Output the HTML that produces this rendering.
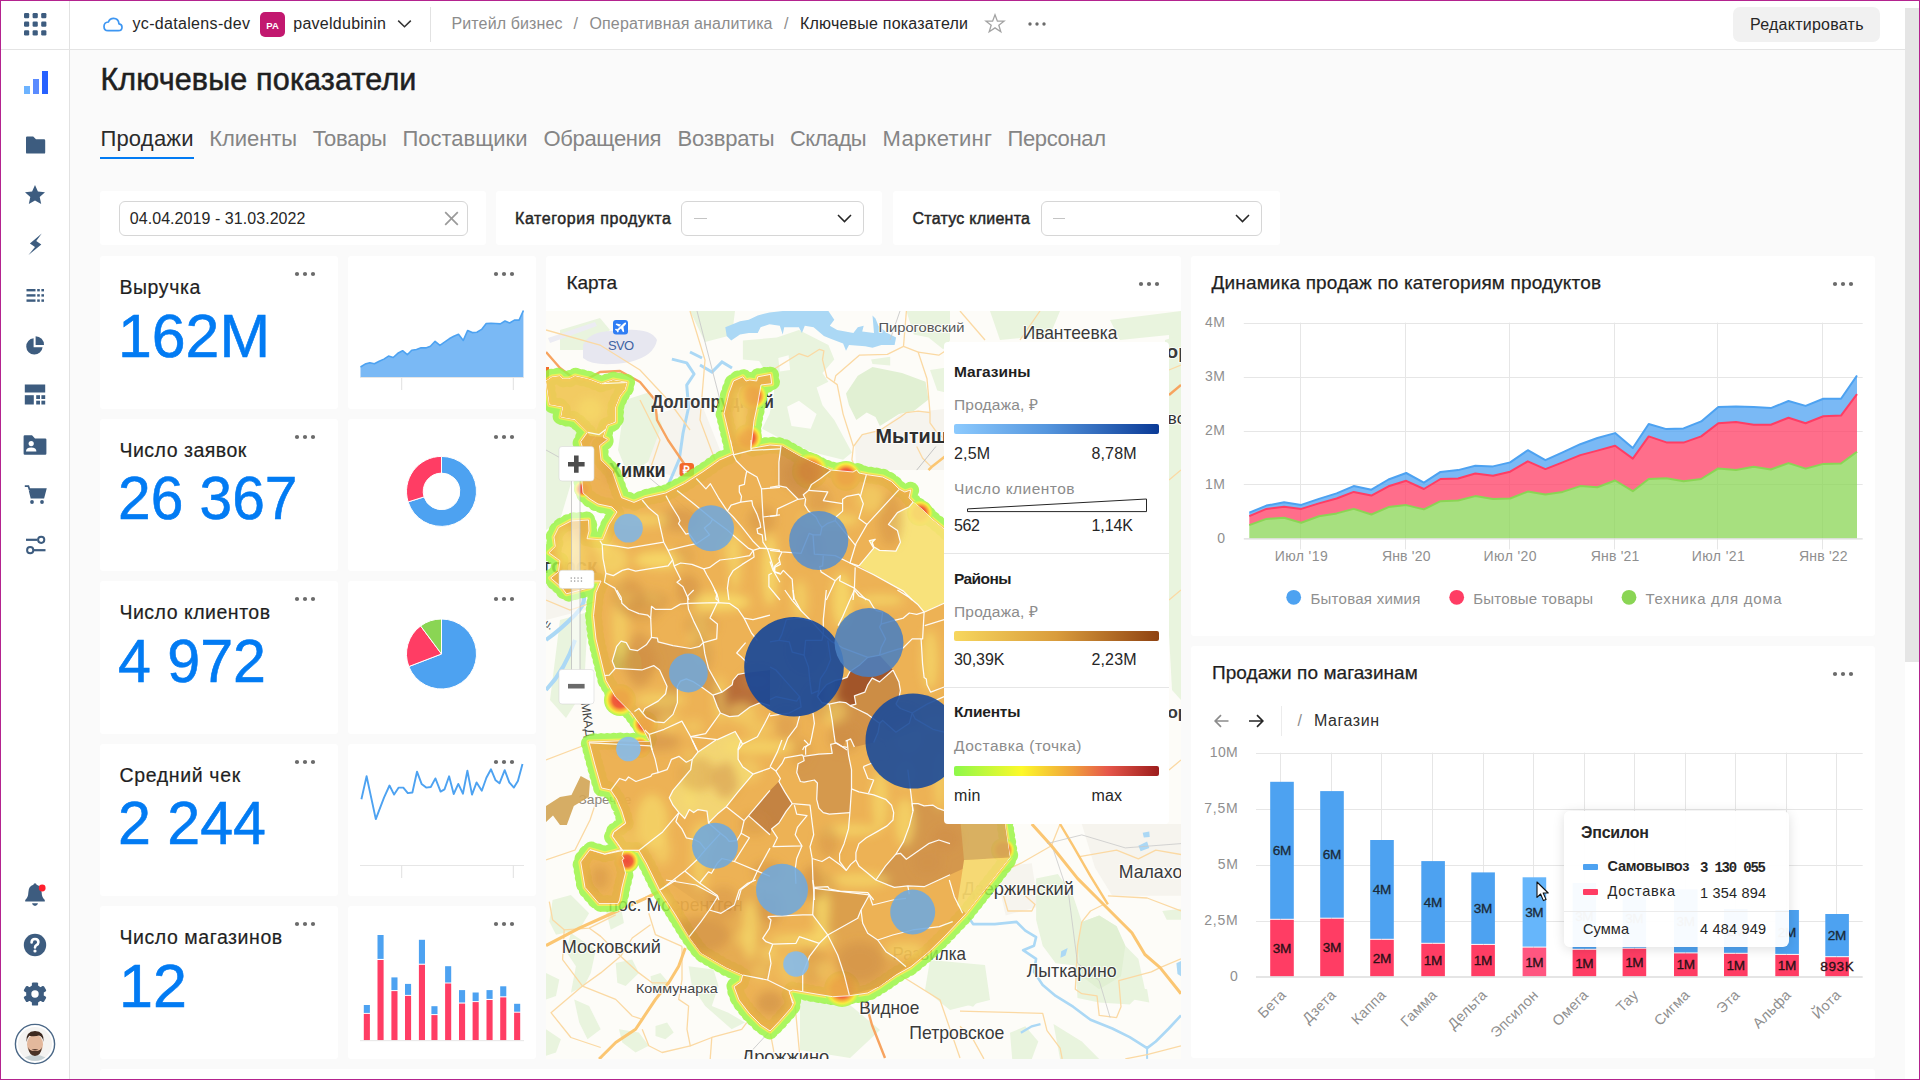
<!DOCTYPE html>
<html lang="ru"><head><meta charset="utf-8"><title>Ключевые показатели</title><style>html,body{margin:0;padding:0;}body{width:1920px;height:1080px;overflow:hidden;background:#fafafa;position:relative;font-family:"Liberation Sans",sans-serif;}.b{position:absolute;display:block;}.t{position:absolute;white-space:nowrap;line-height:1;}</style></head><body>
<div class="b" style="left:1px;top:1px;width:68px;height:1078px;background:#fff;"></div>
<div class="b" style="left:69px;top:1px;width:1px;height:1078px;background:#e2e2e2;"></div>
<svg class="b" style="left:23.8px;top:12.6px" width="23" height="23"><rect x="0.0" y="0.0" width="5.2" height="5.2" rx="1.2" fill="#3d5c7f"/><rect x="8.6" y="0.0" width="5.2" height="5.2" rx="1.2" fill="#3d5c7f"/><rect x="17.2" y="0.0" width="5.2" height="5.2" rx="1.2" fill="#3d5c7f"/><rect x="0.0" y="8.6" width="5.2" height="5.2" rx="1.2" fill="#3d5c7f"/><rect x="8.6" y="8.6" width="5.2" height="5.2" rx="1.2" fill="#3d5c7f"/><rect x="17.2" y="8.6" width="5.2" height="5.2" rx="1.2" fill="#3d5c7f"/><rect x="0.0" y="17.2" width="5.2" height="5.2" rx="1.2" fill="#3d5c7f"/><rect x="8.6" y="17.2" width="5.2" height="5.2" rx="1.2" fill="#3d5c7f"/><rect x="17.2" y="17.2" width="5.2" height="5.2" rx="1.2" fill="#3d5c7f"/></svg>
<svg class="b" style="left:23px;top:70px" width="26" height="25"><rect x="1" y="16" width="6" height="8" fill="#6db3ff"/><rect x="10" y="9" width="6" height="15" fill="#5a8bff"/><rect x="19" y="1" width="6" height="23" fill="#2761ff"/></svg>
<svg class="b" style="left:25px;top:135px" width="22" height="20" viewBox="0 0 22 20"><path d="M1 2.6Q1 1.5 2.1 1.5H8.2L11 4.3H19Q20.2 4.3 20.2 5.5V17.4Q20.2 18.6 19 18.6H2.2Q1 18.6 1 17.4Z" fill="#3d5c7f"/></svg>
<svg class="b" style="left:24px;top:184px" width="22" height="21" viewBox="0 0 22 21"><path d="M11 1L13.9 7.6L21 8.3L15.7 13.1L17.2 20.1L11 16.5L4.8 20.1L6.3 13.1L1 8.3L8.1 7.6Z" fill="#3d5c7f"/></svg>
<svg class="b" style="left:27px;top:232px" width="16" height="24" viewBox="0 0 16 24"><path d="M14.75 1.6L2.9 11.4L8 14.9L1.5 23L14.3 12.4L9.25 9Z" fill="#3d5c7f"/></svg>
<svg class="b" style="left:25.6px;top:287.6px" width="19" height="15"><rect x="0.5" y="1.0" width="9" height="2.4" fill="#3d5c7f"/><rect x="11.2" y="1.0" width="2.6" height="2.4" fill="#3d5c7f"/><rect x="15.4" y="1.0" width="2.6" height="2.4" fill="#3d5c7f"/><rect x="0.5" y="6.2" width="9" height="2.4" fill="#3d5c7f"/><rect x="11.2" y="6.2" width="2.6" height="2.4" fill="#3d5c7f"/><rect x="15.4" y="6.2" width="2.6" height="2.4" fill="#3d5c7f"/><rect x="0.5" y="11.4" width="9" height="2.4" fill="#3d5c7f"/><rect x="11.2" y="11.4" width="2.6" height="2.4" fill="#3d5c7f"/><rect x="15.4" y="11.4" width="2.6" height="2.4" fill="#3d5c7f"/></svg>
<svg class="b" style="left:25px;top:335px" width="20" height="20" viewBox="0 0 20 20"><path d="M8.6 3.2A8.2 8.2 0 1 0 17.6 12.2H8.6Z" fill="#3d5c7f"/><path d="M10.6 1.2A8.6 8.6 0 0 1 19 10H10.6Z" fill="#3d5c7f"/></svg>
<svg class="b" style="left:24px;top:384px" width="22" height="22" viewBox="0 0 22 22"><rect x="0.8" y="0.5" width="20.4" height="8" fill="#3d5c7f"/><rect x="0.8" y="11.2" width="9" height="9.3" fill="#3d5c7f"/><rect x="12.2" y="11.2" width="3.8" height="3.8" fill="#3d5c7f"/><rect x="17.4" y="11.2" width="3.8" height="3.8" fill="#3d5c7f"/><rect x="12.2" y="16.7" width="3.8" height="3.8" fill="#3d5c7f"/><rect x="17.4" y="16.7" width="3.8" height="3.8" fill="#3d5c7f"/></svg>
<svg class="b" style="left:23px;top:434px" width="24" height="22" viewBox="0 0 24 22"><path d="M0.6 2.4Q0.6 1.2 1.8 1.2H9L12 4.4H22.2Q23.4 4.4 23.4 5.6V19.6Q23.4 20.8 22.2 20.8H1.8Q0.6 20.8 0.6 19.6Z" fill="#3d5c7f"/><circle cx="8.2" cy="9.6" r="2.6" fill="#fff"/><path d="M3 17.6Q3 13.4 8.2 13.4Q13.4 13.4 13.4 17.6Z" fill="#fff"/></svg>
<svg class="b" style="left:24px;top:485px" width="23" height="20" viewBox="0 0 23 20"><path d="M0.8 1.2H4.4L5.4 4.2H21.6L19.4 12.6H7.4L5.6 5.2" fill="none" stroke="#3d5c7f" stroke-width="1.8"/><path d="M5.6 4.2H21.4L19.3 12.2H7.6Z" fill="#3d5c7f"/><circle cx="8" cy="17" r="1.9" fill="#3d5c7f"/><circle cx="18" cy="17" r="1.9" fill="#3d5c7f"/></svg>
<svg class="b" style="left:25px;top:534px" width="22" height="22" viewBox="0 0 22 22"><path d="M1 5.8H12.5" stroke="#3d5c7f" stroke-width="2.2"/><circle cx="16.2" cy="5.8" r="3.1" fill="#fff" stroke="#3d5c7f" stroke-width="2"/><path d="M9 16.2H20.5" stroke="#3d5c7f" stroke-width="2.2"/><circle cx="5.2" cy="16.2" r="3.1" fill="#fff" stroke="#3d5c7f" stroke-width="2"/></svg>
<svg class="b" style="left:23px;top:881px" width="26" height="27" viewBox="0 0 26 27"><path d="M12 2.2Q13.4 2.2 13.6 3.8Q18.4 5 18.6 11Q18.8 16.6 21.8 19V20.6H2.2V19Q5.2 16.6 5.4 11Q5.6 5 10.4 3.8Q10.6 2.2 12 2.2Z" fill="#3d5c7f"/><path d="M9 22.2H15Q14.4 25 12 25Q9.6 25 9 22.2Z" fill="#3d5c7f"/><circle cx="19.2" cy="7" r="3.4" fill="#ff1f2d"/></svg>
<svg class="b" style="left:23px;top:932.5px" width="24" height="24" viewBox="0 0 24 24"><circle cx="12" cy="12" r="11.2" fill="#3d5c7f"/><path d="M8.6 9.4Q8.6 6 12 6Q15.4 6 15.4 9.2Q15.4 11 13.4 12.2Q12 13 12 14.4" fill="none" stroke="#fff" stroke-width="2.6" stroke-linecap="round"/><circle cx="12" cy="18" r="1.6" fill="#fff"/></svg>
<svg class="b" style="left:23px;top:982.4px" width="24" height="24" viewBox="0 0 24 24"><rect x="8.9" y="0.4" width="6.2" height="6" rx="1.2" fill="#3d5c7f" transform="rotate(0 12 12)"/><rect x="8.9" y="0.4" width="6.2" height="6" rx="1.2" fill="#3d5c7f" transform="rotate(60 12 12)"/><rect x="8.9" y="0.4" width="6.2" height="6" rx="1.2" fill="#3d5c7f" transform="rotate(120 12 12)"/><rect x="8.9" y="0.4" width="6.2" height="6" rx="1.2" fill="#3d5c7f" transform="rotate(180 12 12)"/><rect x="8.9" y="0.4" width="6.2" height="6" rx="1.2" fill="#3d5c7f" transform="rotate(240 12 12)"/><rect x="8.9" y="0.4" width="6.2" height="6" rx="1.2" fill="#3d5c7f" transform="rotate(300 12 12)"/><circle cx="12" cy="12" r="8.9" fill="#3d5c7f"/><circle cx="12" cy="12" r="3.7" fill="#fff"/></svg>
<svg class="b" style="left:14px;top:1023.3px" width="42" height="42" viewBox="0 0 42 42"><defs><clipPath id="avc"><circle cx="21" cy="21" r="17"/></clipPath></defs><circle cx="21" cy="21" r="19.6" fill="#fff" stroke="#4a6786" stroke-width="1.4"/><g clip-path="url(#avc)"><rect x="0" y="0" width="42" height="42" fill="#f4f3f1"/><ellipse cx="21" cy="40" rx="14" ry="8" fill="#c9d3d6"/><ellipse cx="21" cy="21.5" rx="8" ry="10.2" fill="#e3b89c"/><path d="M12.4 19Q11.4 8.4 21 8Q30.6 8.4 29.6 19Q28.6 13.6 25 12.6Q20 14 15.4 12.8Q13.2 14.4 12.4 19Z" fill="#3d2a20"/><path d="M14 24Q15 32.6 21 33Q27 32.6 28 24Q26.6 28.4 21 28Q15.4 28.4 14 24Z" fill="#4a3327"/><path d="M17.6 26.6Q21 25.4 24.4 26.6Q21 28.4 17.6 26.6Z" fill="#5a3d30"/></g></svg>
<div class="b" style="left:70px;top:1px;width:1835px;height:48px;background:#fff;"></div>
<div class="b" style="left:1px;top:49px;width:1904px;height:1px;background:#e4e4e4;"></div>
<svg class="b" style="left:102px;top:15px" width="22" height="18" viewBox="0 0 22 18"><path d="M6 15.6H16.4Q20 15.6 20 12.2Q20 9.2 17 8.8Q16.4 3.4 11.6 3.4Q7.8 3.4 6.4 7Q2 7.4 2 11.4Q2 15.6 6 15.6Z" fill="none" stroke="#3d96f2" stroke-width="1.7" stroke-linejoin="round"/></svg>
<span id="t1" class="t" style="left:132.5px;top:15.5px;font-size:16px;color:#262626;letter-spacing:0.325px;">yc-datalens-dev</span>
<div class="b" style="left:260px;top:12px;width:25px;height:25px;background:#c2186f;border-radius:5px;"></div>
<span id="t2" class="t" style="left:272.5px;top:20.6px;font-size:9.5px;color:#fff;font-weight:700;transform:translateX(-50%);">PA</span>
<span id="t3" class="t" style="left:293.3px;top:15.5px;font-size:16px;color:#262626;letter-spacing:0.258px;">paveldubinin</span>
<svg class="b" style="left:397px;top:19px" width="15" height="10" viewBox="0 0 15 10"><path d="M1.2 1.6L7.5 7.8L13.8 1.6" fill="none" stroke="#333" stroke-width="1.5"/></svg>
<div class="b" style="left:430px;top:7px;width:1px;height:35px;background:#e2e2e2;"></div>
<span id="t4" class="t" style="left:451.5px;top:15.5px;font-size:16px;color:#8c8c8c;letter-spacing:0.121px;">Ритейл бизнес</span>
<span id="t5" class="t" style="left:573.5px;top:15.5px;font-size:16px;color:#8c8c8c;">/</span>
<span id="t6" class="t" style="left:589.5px;top:15.5px;font-size:16px;color:#8c8c8c;letter-spacing:0.126px;">Оперативная аналитика</span>
<span id="t7" class="t" style="left:784.0px;top:15.5px;font-size:16px;color:#8c8c8c;">/</span>
<span id="t8" class="t" style="left:800.0px;top:15.5px;font-size:16px;color:#262626;letter-spacing:0.212px;">Ключевые показатели</span>
<svg class="b" style="left:984px;top:13px" width="22" height="21" viewBox="0 0 22 21"><path d="M11 1.8L13.4 8.2H20L14.8 12.2L16.8 18.8L11 14.9L5.2 18.8L7.2 12.2L2 8.2H8.6Z" fill="none" stroke="#a3a3a3" stroke-width="1.3" stroke-linejoin="miter"/></svg>
<svg class="b" style="left:1025.5px;top:20.5px" width="22" height="6" viewBox="0 0 22 6"><circle cx="4" cy="3" r="1.7" fill="#6b6b6b"/><circle cx="11" cy="3" r="1.7" fill="#6b6b6b"/><circle cx="18" cy="3" r="1.7" fill="#6b6b6b"/></svg>
<div class="b" style="left:1733px;top:7px;width:147px;height:35px;background:#f1f1f1;border-radius:7px;"></div>
<span id="t9" class="t" style="left:1750.0px;top:16.5px;font-size:16px;color:#262626;letter-spacing:0.247px;">Редактировать</span>
<div class="b" style="left:1905px;top:1px;width:14px;height:1078px;background:#fff;"></div>
<div class="b" style="left:1905px;top:8px;width:14px;height:654px;background:#e5e5e5;"></div>
<span id="t10" class="t" style="left:100.4px;top:63.8px;font-size:30.5px;color:#1f1f1f;-webkit-text-stroke:0.55px #1f1f1f;letter-spacing:0.168px;">Ключевые показатели</span>
<span id="t11" class="t" style="left:100.4px;top:127.8px;font-size:22px;color:#2b2b2b;letter-spacing:0.218px;">Продажи</span>
<span id="t12" class="t" style="left:209.3px;top:127.8px;font-size:22px;color:#858585;letter-spacing:-0.086px;">Клиенты</span>
<span id="t13" class="t" style="left:312.7px;top:127.8px;font-size:22px;color:#858585;letter-spacing:-0.298px;">Товары</span>
<span id="t14" class="t" style="left:402.5px;top:127.8px;font-size:22px;color:#858585;letter-spacing:-0.012px;">Поставщики</span>
<span id="t15" class="t" style="left:543.5px;top:127.8px;font-size:22px;color:#858585;letter-spacing:-0.328px;">Обращения</span>
<span id="t16" class="t" style="left:677.5px;top:127.8px;font-size:22px;color:#858585;letter-spacing:-0.188px;">Возвраты</span>
<span id="t17" class="t" style="left:790.0px;top:127.8px;font-size:22px;color:#858585;letter-spacing:-0.597px;">Склады</span>
<span id="t18" class="t" style="left:882.5px;top:127.8px;font-size:22px;color:#858585;letter-spacing:0.316px;">Маркетинг</span>
<span id="t19" class="t" style="left:1007.5px;top:127.8px;font-size:22px;color:#858585;letter-spacing:-0.357px;">Персонал</span>
<div class="b" style="left:100px;top:157px;width:94px;height:2px;background:#027bf3;"></div>
<div class="b" style="left:100px;top:191.4px;width:386px;height:54px;background:#fff;border-radius:3px;"></div>
<div class="b" style="left:496px;top:191.4px;width:386px;height:54px;background:#fff;border-radius:3px;"></div>
<div class="b" style="left:893px;top:191.4px;width:387px;height:54px;background:#fff;border-radius:3px;"></div>
<div class="b" style="left:119px;top:201px;width:349px;height:34.5px;background:#fff;border-radius:6px;border:1px solid #d6d6d6;box-sizing:border-box;"></div>
<span id="t20" class="t" style="left:129.8px;top:210.5px;font-size:16px;color:#262626;letter-spacing:0.056px;">04.04.2019 - 31.03.2022</span>
<svg class="b" style="left:443px;top:210px" width="17" height="17" viewBox="0 0 17 17"><path d="M2.2 2.2L14.8 14.8M14.8 2.2L2.2 14.8" stroke="#9a9a9a" stroke-width="1.7"/></svg>
<span id="t21" class="t" style="left:515.0px;top:210.5px;font-size:16px;color:#262626;-webkit-text-stroke:0.45px #262626;letter-spacing:0.593px;">Категория продукта</span>
<div class="b" style="left:681px;top:201px;width:183px;height:34.5px;background:#fff;border-radius:6px;border:1px solid #d6d6d6;box-sizing:border-box;"></div>
<div class="b" style="left:694px;top:218px;width:12.5px;height:1px;background:#c4c4c4;"></div>
<svg class="b" style="left:836px;top:213px" width="17" height="11" viewBox="0 0 17 11"><path d="M2 2L8.5 8.6L15 2" fill="none" stroke="#262626" stroke-width="1.5"/></svg>
<span id="t22" class="t" style="left:912.5px;top:210.5px;font-size:16px;color:#262626;-webkit-text-stroke:0.45px #262626;letter-spacing:0.249px;">Статус клиента</span>
<div class="b" style="left:1041px;top:201px;width:221px;height:34.5px;background:#fff;border-radius:6px;border:1px solid #d6d6d6;box-sizing:border-box;"></div>
<div class="b" style="left:1052.5px;top:218px;width:12.5px;height:1px;background:#c4c4c4;"></div>
<svg class="b" style="left:1233.5px;top:213px" width="17" height="11" viewBox="0 0 17 11"><path d="M2 2L8.5 8.6L15 2" fill="none" stroke="#262626" stroke-width="1.5"/></svg>
<div class="b" style="left:100px;top:256.25px;width:237.5px;height:152.5px;background:#fff;border-radius:3px;"></div>
<div class="b" style="left:347.5px;top:256.25px;width:188.5px;height:152.5px;background:#fff;border-radius:3px;"></div>
<span id="t23" class="t" style="left:119.4px;top:278.0px;font-size:19.5px;color:#1f1f1f;-webkit-text-stroke:0.2px #1f1f1f;letter-spacing:0.604px;">Выручка</span>
<span id="t24" class="t" style="left:118.0px;top:304.5px;font-size:61.5px;color:#027bf3;-webkit-text-stroke:0.6px #027bf3;transform-origin:0 0;transform:scaleX(0.9880);white-space:pre;">162M</span>
<svg class="b" style="left:294.3px;top:271.05px" width="22" height="6" viewBox="0 0 22 6"><circle cx="3" cy="3" r="2.1" fill="#6b6b6b"/><circle cx="11" cy="3" r="2.1" fill="#6b6b6b"/><circle cx="19" cy="3" r="2.1" fill="#6b6b6b"/></svg>
<svg class="b" style="left:493px;top:271.05px" width="22" height="6" viewBox="0 0 22 6"><circle cx="3" cy="3" r="2.1" fill="#6b6b6b"/><circle cx="11" cy="3" r="2.1" fill="#6b6b6b"/><circle cx="19" cy="3" r="2.1" fill="#6b6b6b"/></svg>
<div class="b" style="left:100px;top:418.75px;width:237.5px;height:152.5px;background:#fff;border-radius:3px;"></div>
<div class="b" style="left:347.5px;top:418.75px;width:188.5px;height:152.5px;background:#fff;border-radius:3px;"></div>
<span id="t25" class="t" style="left:119.4px;top:440.5px;font-size:19.5px;color:#1f1f1f;-webkit-text-stroke:0.2px #1f1f1f;letter-spacing:0.511px;">Число заявок</span>
<span id="t26" class="t" style="left:118.0px;top:467.0px;font-size:61.5px;color:#027bf3;-webkit-text-stroke:0.6px #027bf3;transform-origin:0 0;transform:scaleX(0.9542);white-space:pre;">26 367</span>
<svg class="b" style="left:294.3px;top:433.55px" width="22" height="6" viewBox="0 0 22 6"><circle cx="3" cy="3" r="2.1" fill="#6b6b6b"/><circle cx="11" cy="3" r="2.1" fill="#6b6b6b"/><circle cx="19" cy="3" r="2.1" fill="#6b6b6b"/></svg>
<svg class="b" style="left:493px;top:433.55px" width="22" height="6" viewBox="0 0 22 6"><circle cx="3" cy="3" r="2.1" fill="#6b6b6b"/><circle cx="11" cy="3" r="2.1" fill="#6b6b6b"/><circle cx="19" cy="3" r="2.1" fill="#6b6b6b"/></svg>
<div class="b" style="left:100px;top:581.25px;width:237.5px;height:152.5px;background:#fff;border-radius:3px;"></div>
<div class="b" style="left:347.5px;top:581.25px;width:188.5px;height:152.5px;background:#fff;border-radius:3px;"></div>
<span id="t27" class="t" style="left:119.4px;top:603.0px;font-size:19.5px;color:#1f1f1f;-webkit-text-stroke:0.2px #1f1f1f;letter-spacing:0.511px;">Число клиентов</span>
<span id="t28" class="t" style="left:118.0px;top:629.5px;font-size:61.5px;color:#027bf3;-webkit-text-stroke:0.6px #027bf3;transform-origin:0 0;transform:scaleX(0.9616);white-space:pre;">4 972</span>
<svg class="b" style="left:294.3px;top:596.05px" width="22" height="6" viewBox="0 0 22 6"><circle cx="3" cy="3" r="2.1" fill="#6b6b6b"/><circle cx="11" cy="3" r="2.1" fill="#6b6b6b"/><circle cx="19" cy="3" r="2.1" fill="#6b6b6b"/></svg>
<svg class="b" style="left:493px;top:596.05px" width="22" height="6" viewBox="0 0 22 6"><circle cx="3" cy="3" r="2.1" fill="#6b6b6b"/><circle cx="11" cy="3" r="2.1" fill="#6b6b6b"/><circle cx="19" cy="3" r="2.1" fill="#6b6b6b"/></svg>
<div class="b" style="left:100px;top:743.75px;width:237.5px;height:152.5px;background:#fff;border-radius:3px;"></div>
<div class="b" style="left:347.5px;top:743.75px;width:188.5px;height:152.5px;background:#fff;border-radius:3px;"></div>
<span id="t29" class="t" style="left:119.4px;top:765.5px;font-size:19.5px;color:#1f1f1f;-webkit-text-stroke:0.2px #1f1f1f;letter-spacing:0.657px;">Средний чек</span>
<span id="t30" class="t" style="left:118.0px;top:792.0px;font-size:61.5px;color:#027bf3;-webkit-text-stroke:0.6px #027bf3;transform-origin:0 0;transform:scaleX(0.9616);white-space:pre;">2 244</span>
<svg class="b" style="left:294.3px;top:758.55px" width="22" height="6" viewBox="0 0 22 6"><circle cx="3" cy="3" r="2.1" fill="#6b6b6b"/><circle cx="11" cy="3" r="2.1" fill="#6b6b6b"/><circle cx="19" cy="3" r="2.1" fill="#6b6b6b"/></svg>
<svg class="b" style="left:493px;top:758.55px" width="22" height="6" viewBox="0 0 22 6"><circle cx="3" cy="3" r="2.1" fill="#6b6b6b"/><circle cx="11" cy="3" r="2.1" fill="#6b6b6b"/><circle cx="19" cy="3" r="2.1" fill="#6b6b6b"/></svg>
<div class="b" style="left:100px;top:906.25px;width:237.5px;height:152.5px;background:#fff;border-radius:3px;"></div>
<div class="b" style="left:347.5px;top:906.25px;width:188.5px;height:152.5px;background:#fff;border-radius:3px;"></div>
<span id="t31" class="t" style="left:119.4px;top:928.0px;font-size:19.5px;color:#1f1f1f;-webkit-text-stroke:0.2px #1f1f1f;letter-spacing:0.566px;">Число магазинов</span>
<span id="t32" class="t" style="left:119.0px;top:954.5px;font-size:61.5px;color:#027bf3;-webkit-text-stroke:0.6px #027bf3;transform-origin:0 0;transform:scaleX(0.9924);white-space:pre;">12</span>
<svg class="b" style="left:294.3px;top:921.05px" width="22" height="6" viewBox="0 0 22 6"><circle cx="3" cy="3" r="2.1" fill="#6b6b6b"/><circle cx="11" cy="3" r="2.1" fill="#6b6b6b"/><circle cx="19" cy="3" r="2.1" fill="#6b6b6b"/></svg>
<svg class="b" style="left:493px;top:921.05px" width="22" height="6" viewBox="0 0 22 6"><circle cx="3" cy="3" r="2.1" fill="#6b6b6b"/><circle cx="11" cy="3" r="2.1" fill="#6b6b6b"/><circle cx="19" cy="3" r="2.1" fill="#6b6b6b"/></svg>
<svg class="b" style="left:0;top:0" width="1920" height="1080" viewBox="0 0 1920 1080"><polygon points="360.5,377.6 360.5,367.0 365.1,364.1 369.8,362.7 374.4,363.8 379.2,361.3 383.9,359.1 388.5,356.1 393.2,357.5 397.8,353.3 402.6,350.7 407.3,354.7 411.7,350.2 416.5,349.5 421.1,347.7 425.8,347.9 430.4,346.3 435.1,341.3 439.9,345.4 444.5,342.2 449.2,338.8 453.8,336.3 458.5,334.3 463.3,340.4 467.6,330.5 472.3,332.6 476.9,332.3 481.6,329.4 486.2,323.5 491.0,323.3 495.7,323.5 500.3,323.9 505.0,321.0 509.6,323.0 514.4,320.1 519.1,320.1 523.4,310.5 523.4,377.6" fill="#4da2f1" fill-opacity="0.75"/><polyline points="360.5,367.0 365.1,364.1 369.8,362.7 374.4,363.8 379.2,361.3 383.9,359.1 388.5,356.1 393.2,357.5 397.8,353.3 402.6,350.7 407.3,354.7 411.7,350.2 416.5,349.5 421.1,347.7 425.8,347.9 430.4,346.3 435.1,341.3 439.9,345.4 444.5,342.2 449.2,338.8 453.8,336.3 458.5,334.3 463.3,340.4 467.6,330.5 472.3,332.6 476.9,332.3 481.6,329.4 486.2,323.5 491.0,323.3 495.7,323.5 500.3,323.9 505.0,321.0 509.6,323.0 514.4,320.1 519.1,320.1 523.4,310.5" fill="none" stroke="#4da2f1" stroke-width="1.6" stroke-linejoin="round"/><path d="M360 377.5H524" stroke="#e6e6e6" stroke-width="1"/><path d="M401.7 377.5V390" stroke="#e0e0e0" stroke-width="1"/><path d="M513.3 377.5V390" stroke="#e0e0e0" stroke-width="1"/><path d="M441.50 456.40A35 35 0 1 1 408.12 501.92L424.05 496.90A18.3 18.3 0 1 0 441.50 473.10Z" fill="#4da2f1" stroke="#fff" stroke-width="1"/><path d="M408.12 501.92A35 35 0 0 1 441.50 456.40L441.50 473.10A18.3 18.3 0 0 0 424.05 496.90Z" fill="#ff3d64" stroke="#fff" stroke-width="1"/><path d="M441.5 654L441.50 619.00A35 35 0 1 1 408.82 666.54Z" fill="#4da2f1" stroke="#fff" stroke-width="1"/><path d="M441.5 654L408.82 666.54A35 35 0 0 1 420.58 625.94Z" fill="#ff3d64" stroke="#fff" stroke-width="1"/><path d="M441.5 654L420.58 625.94A35 35 0 0 1 441.50 619.00Z" fill="#8ad554" stroke="#fff" stroke-width="1"/><polyline points="361.4,799.2 366.6,776.3 375.8,819.1 384.0,797.7 389.5,785.5 394.1,794.6 398.7,787.6 403.3,787.6 407.8,793.1 412.4,792.5 417.0,771.7 421.6,783.9 426.2,787.6 430.8,787.0 435.4,778.4 440.6,791.6 444.5,789.4 449.1,776.3 453.7,794.0 458.3,783.9 462.9,793.7 467.4,770.8 472.0,794.6 476.6,782.4 481.8,790.7 486.4,777.8 491.0,769.3 495.6,780.3 499.5,783.3 504.7,770.2 509.3,782.4 513.9,787.6 517.9,780.9 522.5,764.1" fill="none" stroke="#4da2f1" stroke-width="1.9" stroke-linejoin="round"/><path d="M360 865.5H524" stroke="#e6e6e6" stroke-width="1"/><path d="M401.7 865.5V878" stroke="#e0e0e0" stroke-width="1"/><path d="M513.3 865.5V878" stroke="#e0e0e0" stroke-width="1"/><rect x="363.8" y="1005.0" width="6.1" height="7.9" fill="#4da2f1"/><rect x="363.8" y="1013.9" width="6.1" height="26.3" fill="#ff3d64"/><rect x="377.5" y="935.0" width="6.1" height="23.9" fill="#4da2f1"/><rect x="377.5" y="960.0" width="6.1" height="80.2" fill="#ff3d64"/><rect x="391.4" y="977.4" width="6.1" height="12.7" fill="#4da2f1"/><rect x="391.4" y="991.1" width="6.1" height="49.1" fill="#ff3d64"/><rect x="405.0" y="983.9" width="6.1" height="11.0" fill="#4da2f1"/><rect x="405.0" y="995.9" width="6.1" height="44.3" fill="#ff3d64"/><rect x="418.9" y="939.8" width="6.1" height="23.9" fill="#4da2f1"/><rect x="418.9" y="964.8" width="6.1" height="75.4" fill="#ff3d64"/><rect x="431.4" y="1006.2" width="6.1" height="7.9" fill="#4da2f1"/><rect x="431.4" y="1015.1" width="6.1" height="25.1" fill="#ff3d64"/><rect x="445.1" y="966.2" width="6.1" height="16.3" fill="#4da2f1"/><rect x="445.1" y="983.5" width="6.1" height="56.8" fill="#ff3d64"/><rect x="459.0" y="990.1" width="6.1" height="12.4" fill="#4da2f1"/><rect x="459.0" y="1003.6" width="6.1" height="36.6" fill="#ff3d64"/><rect x="472.6" y="992.5" width="6.1" height="8.6" fill="#4da2f1"/><rect x="472.6" y="1002.1" width="6.1" height="38.1" fill="#ff3d64"/><rect x="486.5" y="990.1" width="6.1" height="8.8" fill="#4da2f1"/><rect x="486.5" y="1000.0" width="6.1" height="40.2" fill="#ff3d64"/><rect x="500.2" y="986.3" width="6.1" height="10.0" fill="#4da2f1"/><rect x="500.2" y="997.4" width="6.1" height="42.9" fill="#ff3d64"/><rect x="514.1" y="1003.8" width="6.1" height="7.9" fill="#4da2f1"/><rect x="514.1" y="1012.7" width="6.1" height="27.5" fill="#ff3d64"/><path d="M360 1040.7H524" stroke="#e6e6e6" stroke-width="1"/></svg>
<div class="b" style="left:546px;top:256px;width:635px;height:802.6px;background:#fff;border-radius:3px;"></div>
<span id="t33" class="t" style="left:566.6px;top:273.2px;font-size:19px;color:#1f1f1f;-webkit-text-stroke:0.25px #1f1f1f;letter-spacing:-0.086px;">Карта</span>
<svg class="b" style="left:1138.3px;top:281px" width="22" height="6" viewBox="0 0 22 6"><circle cx="3" cy="3" r="2.1" fill="#6b6b6b"/><circle cx="11" cy="3" r="2.1" fill="#6b6b6b"/><circle cx="19" cy="3" r="2.1" fill="#6b6b6b"/></svg>
<svg class="b" style="left:546px;top:311px" width="635" height="747.6" viewBox="546 311 635 747.6"><defs><filter id="bl2" x="-20%" y="-20%" width="140%" height="140%"><feGaussianBlur stdDeviation="0.6"/></filter><filter id="bl8" x="-50%" y="-50%" width="200%" height="200%"><feGaussianBlur stdDeviation="9"/></filter><filter id="bl5" x="-50%" y="-50%" width="200%" height="200%"><feGaussianBlur stdDeviation="5"/></filter><clipPath id="mosc"><polygon points="546.0,381.0 552.0,377.0 560.0,376.0 563.0,379.0 569.0,379.0 575.0,376.0 588.0,379.0 591.0,380.0 601.5,384.0 613.0,380.0 627.0,382.5 625.0,389.5 620.0,396.0 615.5,407.0 615.5,422.0 607.0,425.0 603.0,437.0 607.4,439.4 599.5,445.7 601.0,460.0 612.0,471.0 617.0,485.0 621.6,497.7 634.0,502.4 645.0,497.7 665.7,493.0 684.6,483.5 703.0,471.7 719.6,460.0 733.5,454.0 729.0,434.6 724.0,413.8 729.0,393.0 733.5,381.0 742.8,376.8 746.0,381.0 749.7,380.0 756.6,381.0 757.8,376.8 770.5,374.4 771.7,383.7 761.0,385.0 758.0,402.0 754.0,420.7 751.0,448.5 770.0,445.0 782.0,446.0 799.6,456.0 819.0,465.0 830.7,470.0 853.0,472.0 856.7,470.0 859.0,473.0 867.8,474.8 882.6,477.0 891.5,481.5 899.0,489.0 904.8,492.0 910.7,490.0 909.0,497.8 913.0,502.0 922.6,509.6 933.0,520.0 944.0,529.0 960.0,545.0 975.0,560.0 985.0,600.0 1000.0,640.0 1020.0,660.0 1040.0,690.0 1030.0,720.0 1010.0,740.0 1005.0,780.0 1005.0,825.0 1010.0,857.5 966.0,913.7 946.0,935.0 929.0,951.7 911.0,966.7 896.0,975.0 879.0,986.7 867.7,993.0 849.0,995.8 832.7,996.7 816.0,994.0 802.7,991.7 792.7,990.0 789.0,991.7 793.5,1003.0 791.0,1008.0 779.0,1021.7 770.0,1031.0 761.0,1025.0 749.0,1013.0 739.0,1000.0 734.0,986.7 741.0,981.7 742.7,975.0 726.0,967.5 701.0,953.0 689.0,936.7 675.6,915.0 659.4,889.7 646.3,863.0 638.9,850.4 623.5,850.4 622.0,855.5 624.0,858.5 622.0,860.0 624.0,867.0 625.5,873.0 622.0,887.0 619.6,900.0 617.8,903.6 599.0,903.6 585.0,887.4 580.7,862.0 590.0,849.6 604.8,854.0 621.0,849.8 619.6,846.7 612.0,836.0 613.7,831.9 625.6,823.0 621.9,811.0 616.7,799.0 610.7,790.0 601.5,788.0 595.0,765.0 589.0,742.0 620.0,741.0 650.0,741.6 643.0,729.0 631.6,713.0 615.5,697.0 606.0,680.5 601.5,662.0 596.0,639.0 593.5,615.7 596.0,592.6 601.0,581.0 593.0,581.0 590.0,587.5 566.5,593.8 561.7,587.5 550.7,578.0 558.6,571.7 560.0,560.7 549.0,552.8 555.4,546.5 554.0,537.0 558.6,527.6 571.0,521.0 588.5,520.0 589.0,531.0 587.0,538.7 602.7,540.0 604.0,537.0 609.0,524.5 617.0,512.0 612.0,507.0 598.0,504.0 590.0,499.0 583.0,493.0 582.0,482.0 583.0,465.0 584.0,453.0 580.7,441.6 587.7,432.0 575.0,419.6 561.0,417.0 563.0,407.0 549.5,404.5"/></clipPath><radialGradient id="hotg"><stop offset="0" stop-color="#ee4a3a"/><stop offset="0.45" stop-color="#f0603a"/><stop offset="0.62" stop-color="#f9a83a"/><stop offset="0.8" stop-color="#f6ee40"/><stop offset="1" stop-color="#abf65c"/></radialGradient></defs><rect x="546" y="311" width="635" height="748" fill="#fdfcf8"/><polygon points="854.9,443.5 862.2,434.7 879.9,430.3 900.5,414.1 950.0,408.2 950.0,470.1 856.3,470.1" fill="#f6f4ee"/><polygon points="1081.8,824.0 1181.0,824.0 1181.0,895.8 1112.3,895.8 1094.9,867.5" fill="#f6f4ee"/><polygon points="994.8,867.5 1031.8,863.2 1038.3,906.7 1005.7,915.4" fill="#f6f4ee"/><polygon points="640,420 700,400 720,450 690,480 650,470" fill="#f6f4ee"/><polygon points="546,560 590,555 585,610 546,620" fill="#f6f4ee"/><polygon points="546.0,400.0 575.0,420.0 590.0,440.0 575.0,470.0 560.0,520.0 546.0,530.0" fill="#e9f4de"/><polygon points="560.0,330.0 600.0,318.0 610.0,330.0 585.0,350.0 560.0,350.0" fill="#e9f4de"/><polygon points="625.0,400.0 650.0,392.0 662.0,425.0 648.0,462.0 628.0,475.0 618.0,450.0" fill="#e9f4de"/><polygon points="690.0,311.0 735.0,311.0 732.0,335.0 705.0,342.0" fill="#e9f4de"/><polygon points="742.9,340.5 776.8,337.5 798.9,330.1 828.4,344.9 834.3,359.6 822.5,372.9 828.4,381.7 816.6,387.6 822.5,405.3 834.3,420.0 851.9,452.4 843.1,459.7 813.6,452.4 784.2,440.6 762.1,428.8 769.5,414.1 773.9,393.5 773.9,377.3 766.5,372.9 759.1,361.1 742.9,359.6" fill="#e9f4de"/><polygon points="846.0,393.5 857.8,375.8 872.5,367.0 902.0,372.9 925.6,381.7 928.5,399.4 913.8,411.1 899.1,414.1 879.9,425.9 875.5,417.0 866.7,412.6 856.3,420.0 849.0,405.3" fill="#e1f0d3"/><polygon points="871.1,359.6 890.2,356.7 890.2,365.5 872.5,364.0" fill="#e9f4de"/><polygon points="906.4,311.0 950.0,311.0 950.0,340.5 943.2,349.3 928.5,337.5 913.8,334.6" fill="#e9f4de"/><polygon points="930.0,369.9 950.0,367.0 950.0,393.5 937.3,390.5" fill="#e9f4de"/><polygon points="990.0,311.0 1060.0,311.0 1050.0,335.0 1000.0,340.0" fill="#e9f4de"/><polygon points="1110.0,320.0 1181.0,311.0 1181.0,345.0 1169.0,345.0 1169.0,335.0 1120.0,340.0" fill="#e9f4de"/><polygon points="1165.0,340.0 1181.0,335.0 1181.0,700.0 1172.0,690.0 1165.0,560.0" fill="#e9f4de"/><polygon points="552.6,899.9 570.9,894.9 589.1,913.2 579.2,929.8 556.0,934.7 549.3,921.5" fill="#e9f4de"/><polygon points="605.7,909.9 620.6,904.9 623.9,923.1 610.7,929.8" fill="#e9f4de"/><polygon points="570.9,933.1 595.8,949.7 590.8,972.9 584.1,986.1 570.9,992.8 575.9,966.2 565.9,951.3" fill="#e9f4de"/><polygon points="615.7,962.9 632.2,959.6 638.9,972.9 625.6,986.1 617.3,982.8" fill="#e9f4de"/><polygon points="650.5,976.2 660.4,972.9 668.7,982.8 660.4,992.8 652.1,987.8" fill="#e9f4de"/><polygon points="688.6,966.2 713.5,969.6 718.5,986.1 711.8,1006.0 728.4,1012.7 745.0,1022.6 731.7,1029.3 705.2,1006.0 691.9,986.1" fill="#e9f4de"/><polygon points="546.0,972.9 559.3,979.5 556.0,996.1 546.0,999.4" fill="#e9f4de"/><polygon points="574.2,999.4 589.1,1006.0 600.7,1029.3 587.5,1039.2 579.2,1022.6" fill="#e9f4de"/><polygon points="655.5,1025.9 667.1,1022.6 673.7,1032.6 665.4,1039.2 655.5,1035.9" fill="#e9f4de"/><polygon points="619.0,1029.3 638.9,1032.6 648.8,1045.8 635.6,1052.5 622.3,1042.5" fill="#e9f4de"/><polygon points="546.0,1029.3 560.9,1039.2 556.0,1052.5 546.0,1055.8" fill="#e9f4de"/><polygon points="800.0,1000.0 850.0,1005.0 880.0,1030.0 850.0,1058.0 800.0,1050.0" fill="#e9f4de"/><polygon points="930.0,960.0 985.0,965.0 990.0,1000.0 950.0,1010.0 925.0,990.0" fill="#e9f4de"/><polygon points="1036.1,878.4 1057.9,874.0 1073.1,895.8 1081.8,921.9 1099.2,915.4 1116.6,926.2 1125.3,945.8 1138.4,958.9 1144.9,989.3 1129.7,1004.6 1099.2,1002.4 1077.5,998.0 1075.3,965.4 1055.7,963.2 1042.7,945.8 1036.1,919.7" fill="#e9f4de"/><polygon points="1081.8,921.9 1099.2,915.4 1116.6,926.2 1125.3,945.8 1121.0,976.3 1099.2,989.3 1081.8,976.3 1077.5,945.8" fill="#e1f0d3"/><polygon points="960.0,976.3 979.6,971.9 988.3,989.3 973.1,1006.7 960.0,1002.4" fill="#e9f4de"/><polygon points="1010.0,1032.8 1025.3,1026.3 1038.3,1041.5 1031.8,1058.9 1012.2,1058.9" fill="#e9f4de"/><polygon points="1053.5,1024.1 1081.8,1041.5 1099.2,1058.9 1060.1,1058.9" fill="#e9f4de"/><polygon points="1162.3,911.0 1181.0,908.8 1181.0,919.7 1166.7,919.7" fill="#e9f4de"/><polygon points="1121.0,985.0 1147.1,989.3 1149.3,1002.4 1125.3,998.0" fill="#e9f4de"/><polygon points="560.0,620.0 588.0,612.0 584.0,690.0 566.0,718.0 550.0,700.0" fill="#e9f4de"/><polygon points="787.1,406.7 798.9,400.8 816.6,414.1 810.7,428.8 791.5,425.9" fill="#fdfcf8"/><polygon points="778.3,358.1 788.6,355.2 790.1,369.9 779.8,371.4" fill="#fdfcf8"/><path d="M583 345Q590 330 615 331Q650 326 657 340Q654 356 630 362Q595 368 583 358Z" fill="#e7e7f0"/><path d="M548 338L595 322L597 326L550 343Z" fill="#ececf3"/><polygon points="725.3,327.2 740.0,321.3 748.8,319.8 757.7,315.4 769.5,312.5 782.7,311.0 828.4,311.0 834.3,319.8 829.8,325.7 837.2,330.1 853.4,333.1 857.8,327.2 863.7,325.7 862.2,331.6 874.0,333.1 872.5,315.4 875.5,318.4 878.4,325.7 887.3,333.1 896.1,337.5 894.6,344.9 881.4,344.9 872.5,347.8 865.2,346.3 849.0,344.9 846.0,350.8 843.1,343.4 831.3,339.0 823.9,336.0 813.6,327.2 804.8,325.7 801.9,333.1 798.9,327.2 784.2,327.2 782.7,334.6 779.8,325.7 769.5,324.3 760.6,327.2 757.7,333.1 748.8,333.1 740.0,334.6 731.2,340.5 726.7,336.0" fill="#abd8f5"/><polyline points="671.9,359.1 686.7,362.9 694.1,374.0 686.7,385.1 688.6,407.3 683.0,433.2 679.3,459.1 668.2,485.1" fill="none" stroke="#abd8f5" stroke-width="3" stroke-linejoin="round"/><path d="M700 365L712 372L722 362L732 368M690 352L702 358" fill="none" stroke="#abd8f5" stroke-width="3"/><path d="M546 640Q560 630 575 615Q590 600 580 590M546 690Q565 670 575 640" fill="none" stroke="#abd8f5" stroke-width="4"/><polyline points="968.7,917.5 973.1,924.1 994.8,924.1 1016.6,921.9 1025.3,930.6 1036.1,937.1 1034.0,945.8 1023.1,950.2 1036.1,958.9 1034.0,971.9 1042.7,985.0 1055.7,995.9 1073.1,1006.7 1090.5,1019.8 1112.3,1028.5 1129.7,1037.2 1147.1,1048.1 1155.8,1041.5 1168.8,1028.5 1181.0,1015.4" fill="none" stroke="#abd8f5" stroke-width="2.6" stroke-linejoin="round"/><polyline points="1147.1,1048.1 1147.1,1058.9" fill="none" stroke="#abd8f5" stroke-width="2"/><polygon points="1061.2,951.3 1067.7,948.0 1065.5,955.6 1060.5,957.8" fill="#abd8f5"/><polygon points="1142.7,832.7 1149.3,831.6 1149.7,837.1 1143.8,837.5" fill="#abd8f5"/><polygon points="1138.4,845.8 1147.1,841.4 1149.3,847.9 1140.6,851.2" fill="#abd8f5"/><polygon points="1176.4,963.2 1181.0,961.0 1181.0,976.3 1177.5,974.1" fill="#abd8f5"/><polyline points="1020.9,1032.8 1031.8,1026.3 1040.5,1024.1" fill="none" stroke="#abd8f5" stroke-width="2.4"/><polyline points="768.0,372.9 798.9,353.7 807.7,356.7 819.5,349.3 823.9,350.8 822.5,359.6 826.9,377.3 837.2,384.6 843.1,414.1 853.4,446.5 851.9,459.7 856.3,470.1" fill="none" stroke="#fbd9a3" stroke-width="1.3" stroke-linejoin="round"/><polyline points="834.3,381.7 835.7,375.8 859.3,355.2 887.3,354.4 903.5,346.3 906.4,311.0" fill="none" stroke="#fbd9a3" stroke-width="1.3" stroke-linejoin="round"/><polyline points="903.5,346.3 918.2,352.2 927.0,378.7 930.0,412.6 930.0,422.9 937.3,433.2 943.2,437.7" fill="none" stroke="#fbd9a3" stroke-width="1.3" stroke-linejoin="round"/><polyline points="918.2,352.2 938.8,355.2 950.0,347.8" fill="none" stroke="#fbd9a3" stroke-width="1.3" stroke-linejoin="round"/><polyline points="853.4,446.5 862.2,434.7 879.9,430.3 900.5,417.0 906.4,412.6 918.2,411.1 930.0,412.6" fill="none" stroke="#fbd9a3" stroke-width="1.3" stroke-linejoin="round"/><polyline points="916.7,446.5 922.6,458.3 931.5,467.1" fill="none" stroke="#fbd9a3" stroke-width="1.3" stroke-linejoin="round"/><polyline points="549.3,901.6 552.6,919.8 564.2,929.8 589.1,928.1 615.7,914.8" fill="none" stroke="#fbd9a3" stroke-width="1.3" stroke-linejoin="round"/><polyline points="589.1,928.1 600.7,936.4 620.6,956.3 638.9,972.9 652.1,982.8 668.7,982.8" fill="none" stroke="#fbd9a3" stroke-width="1.3" stroke-linejoin="round"/><polyline points="564.2,929.8 562.6,959.6 582.5,986.1 615.7,999.4 632.2,1016.0 642.2,1019.3" fill="none" stroke="#fbd9a3" stroke-width="1.3" stroke-linejoin="round"/><polyline points="620.6,956.3 600.7,972.9 582.5,986.1 551.0,1012.7 570.9,1037.5 600.7,1047.5" fill="none" stroke="#fbd9a3" stroke-width="1.3" stroke-linejoin="round"/><polyline points="650.5,924.8 632.2,938.0 620.6,956.3" fill="none" stroke="#fbd9a3" stroke-width="1.3" stroke-linejoin="round"/><polyline points="648.8,913.2 655.5,934.7 682.0,946.3" fill="none" stroke="#fbd9a3" stroke-width="1.3" stroke-linejoin="round"/><polyline points="682.0,946.3 682.0,979.5 678.7,999.4 688.6,1006.0 687.0,1029.3 690.3,1045.8 711.8,1037.5 741.7,1029.3 746.7,1022.6" fill="none" stroke="#fbd9a3" stroke-width="1.3" stroke-linejoin="round"/><polyline points="642.2,1029.3 648.8,1045.8 662.1,1052.5 690.3,1045.8" fill="none" stroke="#fbd9a3" stroke-width="1.3" stroke-linejoin="round"/><polyline points="711.8,1037.5 710.2,1059.1" fill="none" stroke="#fbd9a3" stroke-width="1.3" stroke-linejoin="round"/><polyline points="1003.5,895.8 1007.9,911.0 1031.8,911.0 1035.0,904.5 1025.3,895.8" fill="none" stroke="#fbd9a3" stroke-width="1.3" stroke-linejoin="round"/><polyline points="992.6,876.2 1020.9,863.2 1051.4,845.8 1060.1,824.0" fill="none" stroke="#fbd9a3" stroke-width="1.3" stroke-linejoin="round"/><polyline points="1079.6,856.6 1116.6,850.1 1138.4,858.8 1155.8,850.1 1181.0,854.5" fill="none" stroke="#fbd9a3" stroke-width="1.3" stroke-linejoin="round"/><polyline points="1107.9,895.8 1147.1,898.0 1181.0,911.0" fill="none" stroke="#fbd9a3" stroke-width="1.3" stroke-linejoin="round"/><polyline points="1081.8,921.9 1077.5,945.8 1075.3,989.3 1081.8,993.7 1097.0,995.9 1099.2,1015.4 1116.6,1017.6 1121.0,1006.7 1118.8,980.6 1151.4,971.9 1160.1,967.6" fill="none" stroke="#fbd9a3" stroke-width="1.3" stroke-linejoin="round"/><polyline points="1081.8,921.9 1090.5,911.0 1103.6,904.5" fill="none" stroke="#fbd9a3" stroke-width="1.3" stroke-linejoin="round"/><polyline points="960.0,1011.1 1042.7,1013.3 1047.0,1030.7 1060.1,1048.1 1062.2,1058.9" fill="none" stroke="#fbd9a3" stroke-width="1.3" stroke-linejoin="round"/><polyline points="960.0,1026.3 973.1,1039.4 983.9,1058.9" fill="none" stroke="#fbd9a3" stroke-width="1.3" stroke-linejoin="round"/><polyline points="1181.0,958.9 1160.1,967.6" fill="none" stroke="#fbd9a3" stroke-width="1.3" stroke-linejoin="round"/><polyline points="1125.3,1058.9 1147.1,1054.6 1181.0,1045.9" fill="none" stroke="#fbd9a3" stroke-width="1.3" stroke-linejoin="round"/><path d="M546 330L600 345L640 370L668 400L690 430" fill="none" stroke="#fbd9a3" stroke-width="1.3"/><path d="M690 311L705 360L700 420L715 460" fill="none" stroke="#fbd9a3" stroke-width="1.3"/><path d="M960 311L985 340" fill="none" stroke="#fbd9a3" stroke-width="1.3"/><path d="M1040 311L1020 340" fill="none" stroke="#fbd9a3" stroke-width="1.3"/><path d="M1169 370L1181 365 M1169 480L1181 470 M1169 600L1181 590 M1169 770L1181 760" fill="none" stroke="#fbd9a3" stroke-width="1.3"/><path d="M546 600L570 610L600 600" fill="none" stroke="#fbd9a3" stroke-width="1.3"/><path d="M546 760L585 745" fill="none" stroke="#fbd9a3" stroke-width="1.3"/><path d="M546 860L575 850L590 820L600 790" fill="none" stroke="#fbd9a3" stroke-width="1.3"/><path d="M770 1031L775 1058" fill="none" stroke="#fbd9a3" stroke-width="1.3"/><path d="M795 1005L800 1058" fill="none" stroke="#fbd9a3" stroke-width="1.3"/><path d="M900 975L940 1000L960 1058" fill="none" stroke="#fbd9a3" stroke-width="1.3"/><path d="M640 400L660 440L650 470L625 478" fill="none" stroke="#fbd9a3" stroke-width="1.3"/><polyline points="546.0,945.5 579.2,928.1 612.3,913.2 645.5,898.2 658.8,891.6" fill="none" stroke="#fbc672" stroke-width="3.2" stroke-linejoin="round"/><polyline points="685.3,948.0 678.7,966.2 668.7,982.8 655.5,999.4 642.2,1019.3 635.6,1029.3 615.7,1042.5 602.4,1055.8 599.1,1059.1" fill="none" stroke="#fbc672" stroke-width="3.0" stroke-linejoin="round"/><polyline points="1031.8,824.0 1051.4,845.8 1077.5,878.4 1103.6,904.5 1131.9,932.8 1144.9,954.5 1160.1,967.6 1181.0,993.7" fill="none" stroke="#fbc672" stroke-width="3.0" stroke-linejoin="round"/><polyline points="1060.1,824.0 1073.1,845.8 1090.5,876.2 1107.9,904.5" fill="none" stroke="#fbc672" stroke-width="2.4" stroke-linejoin="round"/><polyline points="950.0,452.4 931.5,467.1 928.5,470.1" fill="none" stroke="#fbc672" stroke-width="2.6" stroke-linejoin="round"/><path d="M546 352L560 368L580 383L600 372L620 371L640 382L655 400L657 420L668 440L685 465" fill="none" stroke="#f7a35f" stroke-width="2.4" stroke-linejoin="round"/><path d="M865 1000L872 1025L885 1058" fill="none" stroke="#f7a35f" stroke-width="2.4" stroke-linejoin="round"/><path d="M1181 385L1169 395" fill="none" stroke="#f7a35f" stroke-width="2.4" stroke-linejoin="round"/><rect x="546" y="367" width="3" height="13" fill="#f26b2a"/><path d="M697 311L720 400L735 450" fill="none" stroke="#c9c9c9" stroke-width="0.9"/><path d="M640 470L700 520" fill="none" stroke="#c9c9c9" stroke-width="0.9"/><path d="M745 1058L770 1031" fill="none" stroke="#c9c9c9" stroke-width="0.9"/><path d="M900 311L890 340" fill="none" stroke="#c9c9c9" stroke-width="0.9"/><path d="M546 450L600 480" fill="none" stroke="#c9c9c9" stroke-width="0.9"/><polyline points="935.9,446.5 916.7,470.1" fill="none" stroke="#bdbdbd" stroke-width="0.9"/><polyline points="1053.5,850.1 1068.8,895.8 1077.5,963.2 1099.2,980.6 1110.1,1017.6" fill="none" stroke="#c9c9c9" stroke-width="0.8"/><polyline points="1047.0,843.6 1081.8,834.9 1125.3,847.9 1181.0,843.6" fill="none" stroke="#c9c9c9" stroke-width="0.8"/><rect x="613" y="320" width="15" height="14.5" rx="3" fill="#2f7df4"/><path d="M616 330.5L623.6 323.4Q625.4 322 626 322.8Q626.6 323.6 625 325.2L623.4 326.8L624.2 331.6L623 332.2L621 328.6L618.6 330.4L618.6 332L617.6 332.4L616.6 330.8L615 329.8L615.6 328.8L617.2 329L619.2 326.8L615.6 324.6L616.4 323.6L621.2 324.4" fill="#fff"/><text x="608" y="350" font-family="Liberation Sans, sans-serif" font-size="13" fill="#3f63a3" textLength="26">SVO</text><rect x="679.5" y="463" width="14.5" height="13.5" rx="3" fill="#f2692a"/><text x="686.8" y="474" font-family="Liberation Sans, sans-serif" font-size="11.5" font-weight="700" fill="#fff" text-anchor="middle">₽</text><text x="651.5" y="408" font-family="Liberation Sans, sans-serif" font-size="18.5" font-weight="700" fill="#3a3a3a" stroke="#fff" stroke-width="2.2" stroke-opacity="0.75" paint-order="stroke" stroke-linejoin="round" textLength="122.3" lengthAdjust="spacingAndGlyphs">Долгопрудный</text><text x="875.6" y="443.2" font-family="Liberation Sans, sans-serif" font-size="19.5" font-weight="700" fill="#2e2e2e" stroke="#fff" stroke-width="2.2" stroke-opacity="0.75" paint-order="stroke" stroke-linejoin="round" textLength="84" lengthAdjust="spacingAndGlyphs">Мытищи</text><text x="878.5" y="332.3" font-family="Liberation Sans, sans-serif" font-size="13" fill="#555" stroke="#fff" stroke-width="2.2" stroke-opacity="0.75" paint-order="stroke" stroke-linejoin="round" textLength="86" lengthAdjust="spacingAndGlyphs">Пироговский</text><text x="1022.7" y="339" font-family="Liberation Sans, sans-serif" font-size="17.5" fill="#3a3a3a" stroke="#fff" stroke-width="2.2" stroke-opacity="0.75" paint-order="stroke" stroke-linejoin="round" textLength="94.7" lengthAdjust="spacingAndGlyphs">Ивантеевка</text><text x="609" y="477.2" font-family="Liberation Sans, sans-serif" font-size="19.5" font-weight="700" fill="#2e2e2e" stroke="#fff" stroke-width="2.2" stroke-opacity="0.75" paint-order="stroke" stroke-linejoin="round" textLength="56.7" lengthAdjust="spacingAndGlyphs">Химки</text><text x="472" y="573" font-family="Liberation Sans, sans-serif" font-size="19.5" font-weight="700" fill="#3a3a3a" stroke="#fff" stroke-width="2.2" stroke-opacity="0.75" paint-order="stroke" stroke-linejoin="round" textLength="125" lengthAdjust="spacingAndGlyphs">Красногорск</text><text x="578.4" y="804" font-family="Liberation Sans, sans-serif" font-size="13.5" fill="#8d867c" stroke="#fff" stroke-width="2.2" stroke-opacity="0.75" paint-order="stroke" stroke-linejoin="round" textLength="53" lengthAdjust="spacingAndGlyphs">Заречье</text><text x="608.5" y="911" font-family="Liberation Sans, sans-serif" font-size="17.5" fill="#3a3a3a" stroke="#fff" stroke-width="2.2" stroke-opacity="0.75" paint-order="stroke" stroke-linejoin="round" textLength="134.3" lengthAdjust="spacingAndGlyphs">пос. Мосрентген</text><text x="561.7" y="953.4" font-family="Liberation Sans, sans-serif" font-size="19" fill="#3a3a3a" stroke="#fff" stroke-width="2.2" stroke-opacity="0.75" paint-order="stroke" stroke-linejoin="round" textLength="99.3" lengthAdjust="spacingAndGlyphs">Московский</text><text x="636" y="992.8" font-family="Liberation Sans, sans-serif" font-size="13" fill="#444" stroke="#fff" stroke-width="2.2" stroke-opacity="0.75" paint-order="stroke" stroke-linejoin="round" textLength="81.7" lengthAdjust="spacingAndGlyphs">Коммунарка</text><text x="859.3" y="1014.2" font-family="Liberation Sans, sans-serif" font-size="17.5" fill="#3a3a3a" stroke="#fff" stroke-width="2.2" stroke-opacity="0.75" paint-order="stroke" stroke-linejoin="round" textLength="60" lengthAdjust="spacingAndGlyphs">Видное</text><text x="909.3" y="1038.8" font-family="Liberation Sans, sans-serif" font-size="17.5" fill="#3a3a3a" stroke="#fff" stroke-width="2.2" stroke-opacity="0.75" paint-order="stroke" stroke-linejoin="round" textLength="95" lengthAdjust="spacingAndGlyphs">Петровское</text><text x="741.8" y="1063.5" font-family="Liberation Sans, sans-serif" font-size="17.5" fill="#3a3a3a" stroke="#fff" stroke-width="2.2" stroke-opacity="0.75" paint-order="stroke" stroke-linejoin="round" textLength="87.5" lengthAdjust="spacingAndGlyphs">Дрожжино</text><text x="892.5" y="960.5" font-family="Liberation Sans, sans-serif" font-size="17.5" fill="#3a3a3a" stroke="#fff" stroke-width="2.2" stroke-opacity="0.75" paint-order="stroke" stroke-linejoin="round" textLength="73.5" lengthAdjust="spacingAndGlyphs">Развилка</text><text x="962.5" y="895" font-family="Liberation Sans, sans-serif" font-size="17.5" fill="#3a3a3a" stroke="#fff" stroke-width="2.2" stroke-opacity="0.75" paint-order="stroke" stroke-linejoin="round" textLength="111.5" lengthAdjust="spacingAndGlyphs">Дзержинский</text><text x="1026.7" y="977.5" font-family="Liberation Sans, sans-serif" font-size="17.5" fill="#3a3a3a" stroke="#fff" stroke-width="2.2" stroke-opacity="0.75" paint-order="stroke" stroke-linejoin="round" textLength="90" lengthAdjust="spacingAndGlyphs">Лыткарино</text><text x="1118.7" y="878" font-family="Liberation Sans, sans-serif" font-size="17.5" fill="#3a3a3a" stroke="#fff" stroke-width="2.2" stroke-opacity="0.75" paint-order="stroke" stroke-linejoin="round" textLength="91" lengthAdjust="spacingAndGlyphs">Малаховка</text><text x="1155" y="358" font-family="Liberation Sans, sans-serif" font-size="19" font-weight="700" fill="#3a3a3a" stroke="#fff" stroke-width="2.2" stroke-opacity="0.75" paint-order="stroke" stroke-linejoin="round">Королёв</text><text x="1057" y="424" font-family="Liberation Sans, sans-serif" font-size="17" fill="#333" stroke="#fff" stroke-width="2.2" stroke-opacity="0.75" paint-order="stroke" stroke-linejoin="round">Лосино-Петровский</text><text x="1083" y="718" font-family="Liberation Sans, sans-serif" font-size="17" font-weight="700" fill="#3a3a3a" stroke="#fff" stroke-width="2.2" stroke-opacity="0.75" paint-order="stroke" stroke-linejoin="round">Железнодорожный</text><text x="0" y="0" font-family="Liberation Sans, sans-serif" font-size="11.5" fill="#555" transform="translate(478,583) rotate(33)">Новорижское ш.</text><text x="0" y="0" font-family="Liberation Sans, sans-serif" font-size="12.5" fill="#444" transform="translate(581,703) rotate(82)">МКАД</text><g filter="url(#bl2)" opacity="0.84"><polygon points="546.0,381.0 552.0,377.0 560.0,376.0 563.0,379.0 569.0,379.0 575.0,376.0 588.0,379.0 591.0,380.0 601.5,384.0 613.0,380.0 627.0,382.5 625.0,389.5 620.0,396.0 615.5,407.0 615.5,422.0 607.0,425.0 603.0,437.0 607.4,439.4 599.5,445.7 601.0,460.0 612.0,471.0 617.0,485.0 621.6,497.7 634.0,502.4 645.0,497.7 665.7,493.0 684.6,483.5 703.0,471.7 719.6,460.0 733.5,454.0 729.0,434.6 724.0,413.8 729.0,393.0 733.5,381.0 742.8,376.8 746.0,381.0 749.7,380.0 756.6,381.0 757.8,376.8 770.5,374.4 771.7,383.7 761.0,385.0 758.0,402.0 754.0,420.7 751.0,448.5 770.0,445.0 782.0,446.0 799.6,456.0 819.0,465.0 830.7,470.0 853.0,472.0 856.7,470.0 859.0,473.0 867.8,474.8 882.6,477.0 891.5,481.5 899.0,489.0 904.8,492.0 910.7,490.0 909.0,497.8 913.0,502.0 922.6,509.6 933.0,520.0 944.0,529.0 960.0,545.0 975.0,560.0 985.0,600.0 1000.0,640.0 1020.0,660.0 1040.0,690.0 1030.0,720.0 1010.0,740.0 1005.0,780.0 1005.0,825.0 1010.0,857.5 966.0,913.7 946.0,935.0 929.0,951.7 911.0,966.7 896.0,975.0 879.0,986.7 867.7,993.0 849.0,995.8 832.7,996.7 816.0,994.0 802.7,991.7 792.7,990.0 789.0,991.7 793.5,1003.0 791.0,1008.0 779.0,1021.7 770.0,1031.0 761.0,1025.0 749.0,1013.0 739.0,1000.0 734.0,986.7 741.0,981.7 742.7,975.0 726.0,967.5 701.0,953.0 689.0,936.7 675.6,915.0 659.4,889.7 646.3,863.0 638.9,850.4 623.5,850.4 622.0,855.5 624.0,858.5 622.0,860.0 624.0,867.0 625.5,873.0 622.0,887.0 619.6,900.0 617.8,903.6 599.0,903.6 585.0,887.4 580.7,862.0 590.0,849.6 604.8,854.0 621.0,849.8 619.6,846.7 612.0,836.0 613.7,831.9 625.6,823.0 621.9,811.0 616.7,799.0 610.7,790.0 601.5,788.0 595.0,765.0 589.0,742.0 620.0,741.0 650.0,741.6 643.0,729.0 631.6,713.0 615.5,697.0 606.0,680.5 601.5,662.0 596.0,639.0 593.5,615.7 596.0,592.6 601.0,581.0 593.0,581.0 590.0,587.5 566.5,593.8 561.7,587.5 550.7,578.0 558.6,571.7 560.0,560.7 549.0,552.8 555.4,546.5 554.0,537.0 558.6,527.6 571.0,521.0 588.5,520.0 589.0,531.0 587.0,538.7 602.7,540.0 604.0,537.0 609.0,524.5 617.0,512.0 612.0,507.0 598.0,504.0 590.0,499.0 583.0,493.0 582.0,482.0 583.0,465.0 584.0,453.0 580.7,441.6 587.7,432.0 575.0,419.6 561.0,417.0 563.0,407.0 549.5,404.5" fill="none" stroke="#9bf545" stroke-width="17" stroke-linejoin="round" stroke-linecap="round" stroke-dasharray="0.1 6.5"/><polygon points="546.0,381.0 552.0,377.0 560.0,376.0 563.0,379.0 569.0,379.0 575.0,376.0 588.0,379.0 591.0,380.0 601.5,384.0 613.0,380.0 627.0,382.5 625.0,389.5 620.0,396.0 615.5,407.0 615.5,422.0 607.0,425.0 603.0,437.0 607.4,439.4 599.5,445.7 601.0,460.0 612.0,471.0 617.0,485.0 621.6,497.7 634.0,502.4 645.0,497.7 665.7,493.0 684.6,483.5 703.0,471.7 719.6,460.0 733.5,454.0 729.0,434.6 724.0,413.8 729.0,393.0 733.5,381.0 742.8,376.8 746.0,381.0 749.7,380.0 756.6,381.0 757.8,376.8 770.5,374.4 771.7,383.7 761.0,385.0 758.0,402.0 754.0,420.7 751.0,448.5 770.0,445.0 782.0,446.0 799.6,456.0 819.0,465.0 830.7,470.0 853.0,472.0 856.7,470.0 859.0,473.0 867.8,474.8 882.6,477.0 891.5,481.5 899.0,489.0 904.8,492.0 910.7,490.0 909.0,497.8 913.0,502.0 922.6,509.6 933.0,520.0 944.0,529.0 960.0,545.0 975.0,560.0 985.0,600.0 1000.0,640.0 1020.0,660.0 1040.0,690.0 1030.0,720.0 1010.0,740.0 1005.0,780.0 1005.0,825.0 1010.0,857.5 966.0,913.7 946.0,935.0 929.0,951.7 911.0,966.7 896.0,975.0 879.0,986.7 867.7,993.0 849.0,995.8 832.7,996.7 816.0,994.0 802.7,991.7 792.7,990.0 789.0,991.7 793.5,1003.0 791.0,1008.0 779.0,1021.7 770.0,1031.0 761.0,1025.0 749.0,1013.0 739.0,1000.0 734.0,986.7 741.0,981.7 742.7,975.0 726.0,967.5 701.0,953.0 689.0,936.7 675.6,915.0 659.4,889.7 646.3,863.0 638.9,850.4 623.5,850.4 622.0,855.5 624.0,858.5 622.0,860.0 624.0,867.0 625.5,873.0 622.0,887.0 619.6,900.0 617.8,903.6 599.0,903.6 585.0,887.4 580.7,862.0 590.0,849.6 604.8,854.0 621.0,849.8 619.6,846.7 612.0,836.0 613.7,831.9 625.6,823.0 621.9,811.0 616.7,799.0 610.7,790.0 601.5,788.0 595.0,765.0 589.0,742.0 620.0,741.0 650.0,741.6 643.0,729.0 631.6,713.0 615.5,697.0 606.0,680.5 601.5,662.0 596.0,639.0 593.5,615.7 596.0,592.6 601.0,581.0 593.0,581.0 590.0,587.5 566.5,593.8 561.7,587.5 550.7,578.0 558.6,571.7 560.0,560.7 549.0,552.8 555.4,546.5 554.0,537.0 558.6,527.6 571.0,521.0 588.5,520.0 589.0,531.0 587.0,538.7 602.7,540.0 604.0,537.0 609.0,524.5 617.0,512.0 612.0,507.0 598.0,504.0 590.0,499.0 583.0,493.0 582.0,482.0 583.0,465.0 584.0,453.0 580.7,441.6 587.7,432.0 575.0,419.6 561.0,417.0 563.0,407.0 549.5,404.5" fill="none" stroke="#9bf545" stroke-width="12" stroke-linejoin="round"/><polygon points="546.0,381.0 552.0,377.0 560.0,376.0 563.0,379.0 569.0,379.0 575.0,376.0 588.0,379.0 591.0,380.0 601.5,384.0 613.0,380.0 627.0,382.5 625.0,389.5 620.0,396.0 615.5,407.0 615.5,422.0 607.0,425.0 603.0,437.0 607.4,439.4 599.5,445.7 601.0,460.0 612.0,471.0 617.0,485.0 621.6,497.7 634.0,502.4 645.0,497.7 665.7,493.0 684.6,483.5 703.0,471.7 719.6,460.0 733.5,454.0 729.0,434.6 724.0,413.8 729.0,393.0 733.5,381.0 742.8,376.8 746.0,381.0 749.7,380.0 756.6,381.0 757.8,376.8 770.5,374.4 771.7,383.7 761.0,385.0 758.0,402.0 754.0,420.7 751.0,448.5 770.0,445.0 782.0,446.0 799.6,456.0 819.0,465.0 830.7,470.0 853.0,472.0 856.7,470.0 859.0,473.0 867.8,474.8 882.6,477.0 891.5,481.5 899.0,489.0 904.8,492.0 910.7,490.0 909.0,497.8 913.0,502.0 922.6,509.6 933.0,520.0 944.0,529.0 960.0,545.0 975.0,560.0 985.0,600.0 1000.0,640.0 1020.0,660.0 1040.0,690.0 1030.0,720.0 1010.0,740.0 1005.0,780.0 1005.0,825.0 1010.0,857.5 966.0,913.7 946.0,935.0 929.0,951.7 911.0,966.7 896.0,975.0 879.0,986.7 867.7,993.0 849.0,995.8 832.7,996.7 816.0,994.0 802.7,991.7 792.7,990.0 789.0,991.7 793.5,1003.0 791.0,1008.0 779.0,1021.7 770.0,1031.0 761.0,1025.0 749.0,1013.0 739.0,1000.0 734.0,986.7 741.0,981.7 742.7,975.0 726.0,967.5 701.0,953.0 689.0,936.7 675.6,915.0 659.4,889.7 646.3,863.0 638.9,850.4 623.5,850.4 622.0,855.5 624.0,858.5 622.0,860.0 624.0,867.0 625.5,873.0 622.0,887.0 619.6,900.0 617.8,903.6 599.0,903.6 585.0,887.4 580.7,862.0 590.0,849.6 604.8,854.0 621.0,849.8 619.6,846.7 612.0,836.0 613.7,831.9 625.6,823.0 621.9,811.0 616.7,799.0 610.7,790.0 601.5,788.0 595.0,765.0 589.0,742.0 620.0,741.0 650.0,741.6 643.0,729.0 631.6,713.0 615.5,697.0 606.0,680.5 601.5,662.0 596.0,639.0 593.5,615.7 596.0,592.6 601.0,581.0 593.0,581.0 590.0,587.5 566.5,593.8 561.7,587.5 550.7,578.0 558.6,571.7 560.0,560.7 549.0,552.8 555.4,546.5 554.0,537.0 558.6,527.6 571.0,521.0 588.5,520.0 589.0,531.0 587.0,538.7 602.7,540.0 604.0,537.0 609.0,524.5 617.0,512.0 612.0,507.0 598.0,504.0 590.0,499.0 583.0,493.0 582.0,482.0 583.0,465.0 584.0,453.0 580.7,441.6 587.7,432.0 575.0,419.6 561.0,417.0 563.0,407.0 549.5,404.5" fill="none" stroke="#e9f03e" stroke-width="5" stroke-linejoin="round"/><polygon points="546.0,381.0 552.0,377.0 560.0,376.0 563.0,379.0 569.0,379.0 575.0,376.0 588.0,379.0 591.0,380.0 601.5,384.0 613.0,380.0 627.0,382.5 625.0,389.5 620.0,396.0 615.5,407.0 615.5,422.0 607.0,425.0 603.0,437.0 607.4,439.4 599.5,445.7 601.0,460.0 612.0,471.0 617.0,485.0 621.6,497.7 634.0,502.4 645.0,497.7 665.7,493.0 684.6,483.5 703.0,471.7 719.6,460.0 733.5,454.0 729.0,434.6 724.0,413.8 729.0,393.0 733.5,381.0 742.8,376.8 746.0,381.0 749.7,380.0 756.6,381.0 757.8,376.8 770.5,374.4 771.7,383.7 761.0,385.0 758.0,402.0 754.0,420.7 751.0,448.5 770.0,445.0 782.0,446.0 799.6,456.0 819.0,465.0 830.7,470.0 853.0,472.0 856.7,470.0 859.0,473.0 867.8,474.8 882.6,477.0 891.5,481.5 899.0,489.0 904.8,492.0 910.7,490.0 909.0,497.8 913.0,502.0 922.6,509.6 933.0,520.0 944.0,529.0 960.0,545.0 975.0,560.0 985.0,600.0 1000.0,640.0 1020.0,660.0 1040.0,690.0 1030.0,720.0 1010.0,740.0 1005.0,780.0 1005.0,825.0 1010.0,857.5 966.0,913.7 946.0,935.0 929.0,951.7 911.0,966.7 896.0,975.0 879.0,986.7 867.7,993.0 849.0,995.8 832.7,996.7 816.0,994.0 802.7,991.7 792.7,990.0 789.0,991.7 793.5,1003.0 791.0,1008.0 779.0,1021.7 770.0,1031.0 761.0,1025.0 749.0,1013.0 739.0,1000.0 734.0,986.7 741.0,981.7 742.7,975.0 726.0,967.5 701.0,953.0 689.0,936.7 675.6,915.0 659.4,889.7 646.3,863.0 638.9,850.4 623.5,850.4 622.0,855.5 624.0,858.5 622.0,860.0 624.0,867.0 625.5,873.0 622.0,887.0 619.6,900.0 617.8,903.6 599.0,903.6 585.0,887.4 580.7,862.0 590.0,849.6 604.8,854.0 621.0,849.8 619.6,846.7 612.0,836.0 613.7,831.9 625.6,823.0 621.9,811.0 616.7,799.0 610.7,790.0 601.5,788.0 595.0,765.0 589.0,742.0 620.0,741.0 650.0,741.6 643.0,729.0 631.6,713.0 615.5,697.0 606.0,680.5 601.5,662.0 596.0,639.0 593.5,615.7 596.0,592.6 601.0,581.0 593.0,581.0 590.0,587.5 566.5,593.8 561.7,587.5 550.7,578.0 558.6,571.7 560.0,560.7 549.0,552.8 555.4,546.5 554.0,537.0 558.6,527.6 571.0,521.0 588.5,520.0 589.0,531.0 587.0,538.7 602.7,540.0 604.0,537.0 609.0,524.5 617.0,512.0 612.0,507.0 598.0,504.0 590.0,499.0 583.0,493.0 582.0,482.0 583.0,465.0 584.0,453.0 580.7,441.6 587.7,432.0 575.0,419.6 561.0,417.0 563.0,407.0 549.5,404.5" fill="none" stroke="#f7c23c" stroke-width="2.5" stroke-linejoin="round"/></g><circle cx="810" cy="471" r="18" fill="url(#hotg)"/><circle cx="846" cy="476" r="15" fill="url(#hotg)"/><circle cx="753" cy="396" r="14" fill="url(#hotg)"/><circle cx="748" cy="438" r="14" fill="url(#hotg)"/><circle cx="842" cy="989" r="18" fill="url(#hotg)"/><circle cx="620" cy="700" r="16" fill="url(#hotg)"/><circle cx="645" cy="724" r="13" fill="url(#hotg)"/><circle cx="627" cy="861" r="12" fill="url(#hotg)"/><circle cx="640" cy="747" r="11" fill="url(#hotg)"/><circle cx="920" cy="513" r="13" fill="url(#hotg)"/><circle cx="1003" cy="850" r="12" fill="url(#hotg)"/><circle cx="583" cy="489" r="9" fill="url(#hotg)"/><polygon points="546.0,806.0 560.0,797.0 571.5,795.0 580.7,776.0 590.0,781.0 588.8,797.0 573.8,806.0 566.8,825.0 560.0,825.0 553.0,815.6 546.0,822.0" fill="#d3a658" fill-opacity="0.92"/><g opacity="0.93"><polygon points="546.0,381.0 552.0,377.0 560.0,376.0 563.0,379.0 569.0,379.0 575.0,376.0 588.0,379.0 591.0,380.0 601.5,384.0 613.0,380.0 627.0,382.5 625.0,389.5 620.0,396.0 615.5,407.0 615.5,422.0 607.0,425.0 603.0,437.0 607.4,439.4 599.5,445.7 601.0,460.0 612.0,471.0 617.0,485.0 621.6,497.7 634.0,502.4 645.0,497.7 665.7,493.0 684.6,483.5 703.0,471.7 719.6,460.0 733.5,454.0 729.0,434.6 724.0,413.8 729.0,393.0 733.5,381.0 742.8,376.8 746.0,381.0 749.7,380.0 756.6,381.0 757.8,376.8 770.5,374.4 771.7,383.7 761.0,385.0 758.0,402.0 754.0,420.7 751.0,448.5 770.0,445.0 782.0,446.0 799.6,456.0 819.0,465.0 830.7,470.0 853.0,472.0 856.7,470.0 859.0,473.0 867.8,474.8 882.6,477.0 891.5,481.5 899.0,489.0 904.8,492.0 910.7,490.0 909.0,497.8 913.0,502.0 922.6,509.6 933.0,520.0 944.0,529.0 960.0,545.0 975.0,560.0 985.0,600.0 1000.0,640.0 1020.0,660.0 1040.0,690.0 1030.0,720.0 1010.0,740.0 1005.0,780.0 1005.0,825.0 1010.0,857.5 966.0,913.7 946.0,935.0 929.0,951.7 911.0,966.7 896.0,975.0 879.0,986.7 867.7,993.0 849.0,995.8 832.7,996.7 816.0,994.0 802.7,991.7 792.7,990.0 789.0,991.7 793.5,1003.0 791.0,1008.0 779.0,1021.7 770.0,1031.0 761.0,1025.0 749.0,1013.0 739.0,1000.0 734.0,986.7 741.0,981.7 742.7,975.0 726.0,967.5 701.0,953.0 689.0,936.7 675.6,915.0 659.4,889.7 646.3,863.0 638.9,850.4 623.5,850.4 622.0,855.5 624.0,858.5 622.0,860.0 624.0,867.0 625.5,873.0 622.0,887.0 619.6,900.0 617.8,903.6 599.0,903.6 585.0,887.4 580.7,862.0 590.0,849.6 604.8,854.0 621.0,849.8 619.6,846.7 612.0,836.0 613.7,831.9 625.6,823.0 621.9,811.0 616.7,799.0 610.7,790.0 601.5,788.0 595.0,765.0 589.0,742.0 620.0,741.0 650.0,741.6 643.0,729.0 631.6,713.0 615.5,697.0 606.0,680.5 601.5,662.0 596.0,639.0 593.5,615.7 596.0,592.6 601.0,581.0 593.0,581.0 590.0,587.5 566.5,593.8 561.7,587.5 550.7,578.0 558.6,571.7 560.0,560.7 549.0,552.8 555.4,546.5 554.0,537.0 558.6,527.6 571.0,521.0 588.5,520.0 589.0,531.0 587.0,538.7 602.7,540.0 604.0,537.0 609.0,524.5 617.0,512.0 612.0,507.0 598.0,504.0 590.0,499.0 583.0,493.0 582.0,482.0 583.0,465.0 584.0,453.0 580.7,441.6 587.7,432.0 575.0,419.6 561.0,417.0 563.0,407.0 549.5,404.5" fill="#ecad49" stroke="#fff" stroke-width="1" stroke-opacity="0.9"/><g clip-path="url(#mosc)"><polygon points="913.0,502.0 922.6,509.6 933.0,520.0 944.0,529.0 960.0,545.0 975.0,560.0 985.0,600.0 1000.0,640.0 944.0,603.0 924.0,612.2 918.1,604.8 909.3,597.4 903.3,591.0 873.7,574.8 858.9,566.0 873.7,548.1 869.3,540.7 875.2,539.3 872.2,542.2 873.7,546.7 879.6,550.4 895.9,551.1 900.4,542.2 897.4,530.4 888.5,524.4 897.4,512.6 903.3,509.6 909.3,506.7" fill="#f8e172"/><polygon points="692.2,759.3 690.7,769.6 681.9,780.0 673.0,790.4 669.3,797.8 673.0,805.2 678.9,812.6 684.8,818.5 689.3,809.6 693.7,812.6 698.1,809.6 707.0,811.1 708.5,823.0 717.4,814.1 726.3,806.7 738.1,791.9 753.0,774.1 742.6,766.7 738.1,759.3 738.1,748.9 742.6,744.1 735.2,731.5 717.4,739.6 698.1,751.9" fill="#f3d369"/><polygon points="651.5,637.4 657.4,638.1 658.1,641.9 673.0,645.6 690.7,648.5 699.6,646.3 703.3,642.6 704.8,653.7 708.5,668.5 715.9,681.9 721.9,692.2 713.0,695.2 702.6,687.8 693.7,681.9 686.3,678.9 680.4,681.1 677.4,686.3 677.4,702.6 673.0,714.4 664.1,722.6 655.2,721.9 646.3,717.4 642.6,713.0 644.8,708.5 658.1,701.1 665.6,693.7 667.0,686.3 659.6,670.0 653.7,665.6 641.9,670.0 615.2,668.5 612.2,661.1 616.7,646.3 621.1,641.1 626.3,642.6 630.0,649.3 637.4,650.7 646.3,644.8" fill="#d6953f"/><polygon points="612.2,661.1 616.7,646.3 621.1,641.1 626.3,642.6 630.0,649.3 637.4,650.7 641.1,658.1 641.9,670.0 615.2,668.5" fill="#cdb048"/><polygon points="713.0,695.2 721.9,692.2 732.2,684.8 733.0,680.4 738.1,674.4 745.6,673.0 770.0,670.0 770.0,705.6 760.4,702.6 750.0,707.0 738.1,715.9 729.3,716.7 720.4,713.0 717.4,707.0" fill="#b3632b"/><polygon points="867.8,657.4 858.9,665.6 850.0,671.5 847.0,677.4 842.6,678.9 835.2,680.4 826.3,684.8 820.4,692.2 817.4,696.7 821.9,702.6 829.3,704.1 839.6,701.9 845.6,702.6 850.0,705.6 855.9,704.1 854.4,695.9 864.8,692.2 867.8,684.8 872.2,678.1 879.6,681.9 893.0,670.0 879.6,655.2" fill="#9c491a"/><polygon points="855.9,704.1 854.4,695.9 864.8,692.2 867.8,684.8 872.2,678.1 879.6,681.9 893.0,670.0 898.9,681.9 900.4,690.7 898.9,698.1 895.9,704.1 900.4,708.5 912.2,713.0 909.3,723.3 895.9,732.2 882.6,720.4 879.6,723.3 873.7,718.9 867.8,714.4 858.9,710.0 850.0,705.6" fill="#c98538"/><polygon points="829.3,704.1 839.6,701.9 845.6,702.6 850.0,705.6 858.9,710.0 867.8,714.4 873.7,718.9 879.6,723.3 878.1,732.2 873.7,742.6 854.4,747.0 850.7,738.9 845.6,741.1 842.6,747.0 835.2,742.6 833.7,732.2 832.2,720.4" fill="#cf8c3c"/><polygon points="748.5,815.6 770.0,790.4 778.9,781.5 784.8,791.9 792.2,803.7 786.3,811.1 778.9,823.0 771.5,828.9 770.0,834.8" fill="#c07a35"/><polygon points="781.1,445.2 799.6,456.3 818.9,465.2 830.7,470.4 820.4,478.5 811.5,484.4 808.5,490.4 803.3,494.8 804.1,498.5 798.1,499.3 786.3,487.4 778.9,485.9 778.9,462.2" fill="#d4923f"/><polygon points="803.3,756.3 818.9,754.1 832.2,753.3 830.7,744.4 836.7,743.0 842.6,746.7 847.0,747.4 848.5,754.8 851.5,769.6 851.5,788.9 850.0,812.6 829.3,814.1 823.3,812.6 818.9,808.1 816.7,799.3 817.4,783.0 814.4,780.0 804.1,782.2 800.4,781.5 796.7,772.6 798.1,763.7 804.1,760.7" fill="#d39241"/><polygon points="913.0,811.1 912.2,803.7 918.1,803.7 924.1,805.9 933.0,805.2 937.4,808.1 950.0,812.6 992.2,828.9 992.2,855.6 950.0,874.8 924.1,886.7 907.8,885.9 894.4,887.4 888.5,885.2 875.9,880.0 885.6,865.9 895.9,854.1 903.3,842.2 909.3,825.9" fill="#d19040"/><polygon points="960.0,817.0 1005.0,817.0 1010.0,857.5 964.0,860.0" fill="#d7ab56"/><polygon points="964.0,860.0 1010.0,857.5 966.0,913.7 957.0,905.0 961.0,880.0" fill="#f6d76b"/><polygon points="814.3,888.3 869.3,895.0 861.0,910.0 857.7,918.3 827.7,935.0 812.7,915.0" fill="#d9993f"/><polygon points="827.7,935.0 857.7,918.3 862.7,923.3 867.7,933.3 877.7,940.0 886.0,951.7 896.0,958.3 906.0,966.7 879.3,986.7 849.3,995.0 844.3,975.0 837.7,955.0" fill="#e0a044"/><polygon points="666.0,880.0 696.0,885.0 717.7,896.7 709.3,910.0 721.0,913.3 734.3,905.0 739.3,890.0 747.7,883.3 766.0,890.0 767.7,916.7 771.0,920.0 769.3,928.3 762.7,938.3 766.0,941.7 772.7,944.2 769.3,953.3 771.0,963.3 767.7,980.0 742.7,975.0 726.0,967.5 701.0,953.3 689.3,936.7 701.0,921.7 709.3,910.0" fill="#e5a646"/><polygon points="546.0,381.0 552.0,377.0 560.0,376.0 563.0,379.0 569.0,379.0 575.0,376.0 588.0,379.0 591.0,380.0 601.5,384.0 613.0,380.0 627.0,382.5 625.0,389.5 620.0,396.0 615.5,407.0 615.5,422.0 607.0,425.0 603.0,437.0 590.0,436.0 575.0,419.6 561.0,417.0 563.0,407.0 549.5,404.5" fill="#f2c857"/><g filter="url(#bl5)"><ellipse cx="660" cy="560" rx="26" ry="9" fill="#f9df62" fill-opacity="0.75"/><ellipse cx="720" cy="602" rx="30" ry="9" fill="#f9df62" fill-opacity="0.75"/><ellipse cx="640" cy="660" rx="14" ry="28" fill="#cf8a3a" fill-opacity="0.6"/><ellipse cx="770" cy="570" rx="8" ry="36" fill="#f9df62" fill-opacity="0.7"/><ellipse cx="700" cy="935" rx="30" ry="18" fill="#cf8a3a" fill-opacity="0.65"/><ellipse cx="770" cy="1003" rx="14" ry="12" fill="#cf8a3a" fill-opacity="0.7"/><ellipse cx="860" cy="962" rx="24" ry="20" fill="#cf8a3a" fill-opacity="0.65"/><ellipse cx="822" cy="905" rx="8" ry="36" fill="#f9df62" fill-opacity="0.7"/><ellipse cx="680" cy="520" rx="20" ry="12" fill="#cf8a3a" fill-opacity="0.6"/><ellipse cx="762" cy="520" rx="14" ry="14" fill="#cf8a3a" fill-opacity="0.5"/><ellipse cx="890" cy="520" rx="12" ry="26" fill="#cf8a3a" fill-opacity="0.5"/><ellipse cx="842" cy="600" rx="10" ry="28" fill="#f9df62" fill-opacity="0.7"/><ellipse cx="660" cy="742" rx="20" ry="9" fill="#cf8a3a" fill-opacity="0.6"/><ellipse cx="612" cy="560" rx="16" ry="16" fill="#f9df62" fill-opacity="0.6"/><ellipse cx="740" cy="412" rx="7" ry="26" fill="#f9df62" fill-opacity="0.5"/><ellipse cx="590" cy="410" rx="12" ry="12" fill="#f9df62" fill-opacity="0.5"/><ellipse cx="652" cy="822" rx="16" ry="28" fill="#f9df62" fill-opacity="0.6"/><ellipse cx="905" cy="822" rx="10" ry="24" fill="#f9df62" fill-opacity="0.6"/><ellipse cx="760" cy="747" rx="36" ry="7" fill="#f9df62" fill-opacity="0.65"/><ellipse cx="600" cy="878" rx="9" ry="12" fill="#cf8a3a" fill-opacity="0.5"/><ellipse cx="700" cy="640" rx="10" ry="30" fill="#f9df62" fill-opacity="0.6"/><ellipse cx="640" cy="600" rx="20" ry="8" fill="#f9df62" fill-opacity="0.6"/><ellipse cx="800" cy="600" rx="8" ry="20" fill="#f9df62" fill-opacity="0.5"/><ellipse cx="830" cy="520" rx="30" ry="7" fill="#f9df62" fill-opacity="0.6"/><ellipse cx="880" cy="800" rx="8" ry="30" fill="#f9df62" fill-opacity="0.6"/><ellipse cx="700" cy="860" rx="8" ry="30" fill="#f9df62" fill-opacity="0.5"/><ellipse cx="860" cy="880" rx="30" ry="7" fill="#f9df62" fill-opacity="0.6"/><ellipse cx="930" cy="660" rx="8" ry="30" fill="#f9df62" fill-opacity="0.6"/><ellipse cx="750" cy="930" rx="8" ry="30" fill="#f9df62" fill-opacity="0.6"/><ellipse cx="620" cy="620" rx="8" ry="40" fill="#f9df62" fill-opacity="0.5"/><ellipse cx="660" cy="700" rx="26" ry="8" fill="#f9df62" fill-opacity="0.5"/><ellipse cx="905" cy="950" rx="20" ry="8" fill="#f9df62" fill-opacity="0.5"/><ellipse cx="800" cy="474" rx="18" ry="16" fill="#c98538" fill-opacity="0.6"/><ellipse cx="640" cy="520" rx="30" ry="6" fill="#f9df62" fill-opacity="0.6"/><ellipse cx="735" cy="560" rx="6" ry="30" fill="#f9df62" fill-opacity="0.6"/><ellipse cx="690" cy="780" rx="6" ry="30" fill="#f9df62" fill-opacity="0.6"/><ellipse cx="850" cy="830" rx="30" ry="6" fill="#f9df62" fill-opacity="0.6"/><ellipse cx="800" cy="940" rx="30" ry="6" fill="#f9df62" fill-opacity="0.6"/><ellipse cx="720" cy="700" rx="6" ry="24" fill="#f9df62" fill-opacity="0.5"/><ellipse cx="880" cy="600" rx="24" ry="6" fill="#f9df62" fill-opacity="0.6"/><ellipse cx="940" cy="780" rx="6" ry="30" fill="#f9df62" fill-opacity="0.5"/><ellipse cx="650" cy="900" rx="20" ry="6" fill="#f9df62" fill-opacity="0.6"/><ellipse cx="830" cy="700" rx="6" ry="24" fill="#f9df62" fill-opacity="0.5"/><ellipse cx="600" cy="540" rx="10" ry="14" fill="#f9df62" fill-opacity="0.7"/><ellipse cx="565" cy="545" rx="12" ry="20" fill="#f9df62" fill-opacity="0.6"/><ellipse cx="610" cy="460" rx="8" ry="26" fill="#e09a40" fill-opacity="0.6"/><ellipse cx="575" cy="560" rx="16" ry="22" fill="#f9df62" fill-opacity="0.5"/><ellipse cx="729.533105933265" cy="549.950062179986" rx="8.579490293340342" ry="12.287056034453514" fill="#f7d860" fill-opacity="0.3914222292281464"/><ellipse cx="623.1995699098827" cy="738.9409385903928" rx="14.336456836623858" ry="10.69855423574619" fill="#cc8436" fill-opacity="0.3226782533359663"/><ellipse cx="769.8076756570056" cy="908.2316260761802" rx="12.232389646070146" ry="16.274332224055893" fill="#cc8436" fill-opacity="0.5369272356142515"/><ellipse cx="830.8411794469995" cy="680.2406515649135" rx="8.37266144494205" ry="14.867747672389436" fill="#f7d860" fill-opacity="0.3724023215829191"/><ellipse cx="723.3927296407737" cy="902.5469703336166" rx="15.816001636624662" ry="16.38913468926184" fill="#cc8436" fill-opacity="0.3930993856814328"/><ellipse cx="819.0977862838231" cy="503.2781567358613" rx="12.059587128193265" ry="16.80399973181786" fill="#cc8436" fill-opacity="0.40689807641735076"/><ellipse cx="725.6588681507167" cy="780.3477876590485" rx="12.997669968636824" ry="17.943794815224912" fill="#cc8436" fill-opacity="0.47474860843239286"/><ellipse cx="697.6386042888612" cy="774.4445664370957" rx="18.75137495573429" ry="17.294452894392176" fill="#cc8436" fill-opacity="0.37198444122254665"/><ellipse cx="767.2491287140908" cy="871.2846926695822" rx="14.889631004758055" ry="10.392072570474376" fill="#cc8436" fill-opacity="0.4670539641335988"/><ellipse cx="905.8283464851252" cy="773.7037483470135" rx="10.509980102784773" ry="13.562362930189273" fill="#f7d860" fill-opacity="0.4485924692762546"/><ellipse cx="831.9580817129969" cy="711.788825589749" rx="15.5574487608635" ry="11.792786699357155" fill="#f7d860" fill-opacity="0.4660380513686686"/><ellipse cx="624.2677710388879" cy="841.7907712913446" rx="15.944767515733073" ry="14.575398292877718" fill="#f7d860" fill-opacity="0.3711488830235373"/><ellipse cx="754.3165769786843" cy="824.3859394186197" rx="14.616952862997659" ry="11.680483789065445" fill="#cc8436" fill-opacity="0.32927394862043297"/><ellipse cx="651.7360888074737" cy="601.2358618593646" rx="18.714219741262994" ry="10.805813012001387" fill="#cc8436" fill-opacity="0.41229685023733276"/><ellipse cx="819.775963657615" cy="938.1934280140016" rx="14.91187575758812" ry="10.227368516111177" fill="#f7d860" fill-opacity="0.40382412930292466"/><ellipse cx="743.5084661326499" cy="938.622198415055" rx="9.207367246328872" ry="9.409741827922963" fill="#f7d860" fill-opacity="0.35798921670488393"/><ellipse cx="693.3344334723445" cy="727.030247080919" rx="10.101972954388303" ry="8.03274882708051" fill="#f7d860" fill-opacity="0.40473662528133203"/><ellipse cx="747.7014291578902" cy="770.1608485643877" rx="13.523949257087823" ry="12.123931464566226" fill="#f7d860" fill-opacity="0.45439818735228193"/><ellipse cx="870.4800329798006" cy="498.6162334086088" rx="14.239755925648582" ry="14.996105473075811" fill="#f7d860" fill-opacity="0.4994682802991416"/><ellipse cx="756.9515627565074" cy="681.4587811297447" rx="16.34289565685709" ry="10.622478216186876" fill="#cc8436" fill-opacity="0.3168369039607562"/><ellipse cx="683.5052741784658" cy="556.0206895192116" rx="10.525756038902669" ry="10.002332819013567" fill="#cc8436" fill-opacity="0.337816233069857"/><ellipse cx="640.5857472090386" cy="662.7132586783226" rx="18.743323773738197" ry="16.14068987788479" fill="#cc8436" fill-opacity="0.33713762133272285"/><ellipse cx="700.9031026228309" cy="654.1164594084619" rx="11.22842230762195" ry="18.48936926484615" fill="#cc8436" fill-opacity="0.5482756804261786"/><ellipse cx="786.3957836639735" cy="726.4323679006228" rx="11.021876167481684" ry="13.426358382430017" fill="#cc8436" fill-opacity="0.366189222929295"/><ellipse cx="811.30295801685" cy="547.699345616518" rx="10.270424914221685" ry="15.281094409383066" fill="#cc8436" fill-opacity="0.5446253106797432"/><ellipse cx="945.3300121158675" cy="838.984296531135" rx="13.666997917611788" ry="11.670420345343363" fill="#cc8436" fill-opacity="0.49298447710050786"/><ellipse cx="813.0369589971516" cy="882.8990924092338" rx="12.230416731031852" ry="18.115112467735948" fill="#cc8436" fill-opacity="0.5462315126477227"/><ellipse cx="927.3331773301493" cy="862.1327007991285" rx="15.176387242435055" ry="13.555625433549583" fill="#cc8436" fill-opacity="0.30724503768534134"/><ellipse cx="703.6697453071026" cy="837.0366291010654" rx="11.577821422133788" ry="15.49616961020994" fill="#f7d860" fill-opacity="0.5470095145507151"/><ellipse cx="688.184929198495" cy="590.2282881672858" rx="12.04373363276223" ry="16.240663974378183" fill="#cc8436" fill-opacity="0.5250770844710286"/><ellipse cx="936.1742109117159" cy="724.1209159186153" rx="14.397149958797282" ry="8.67822789160304" fill="#f7d860" fill-opacity="0.4651464125512236"/><ellipse cx="900.0561839321833" cy="723.3573546348201" rx="17.891354310202765" ry="13.325171998646098" fill="#cc8436" fill-opacity="0.5002058922241728"/><ellipse cx="760.5547271470806" cy="971.8024134263933" rx="9.360029279775164" ry="9.016306938382915" fill="#f7d860" fill-opacity="0.33778767509537244"/><ellipse cx="658.4697234975497" cy="908.0505536184551" rx="13.25814634188816" ry="10.803260097260022" fill="#f7d860" fill-opacity="0.4371650109966948"/><ellipse cx="810.6324188396222" cy="964.8211466804362" rx="18.71742927989404" ry="18.26155251815221" fill="#cc8436" fill-opacity="0.3527605843320372"/><ellipse cx="700.7339245461815" cy="625.272325915216" rx="15.864371681659616" ry="12.593647952702103" fill="#cc8436" fill-opacity="0.4047531381886359"/><ellipse cx="741.5136095813036" cy="712.8253228300189" rx="15.234374196336319" ry="11.365026165672521" fill="#f7d860" fill-opacity="0.5294302710856661"/><ellipse cx="800.6595764480926" cy="751.8672300910449" rx="10.1870486790542" ry="14.401249123849434" fill="#cc8436" fill-opacity="0.34577697181804967"/><ellipse cx="668.9386848853795" cy="720.9512542048369" rx="12.451804999217707" ry="10.607857208390913" fill="#f7d860" fill-opacity="0.4295871781757592"/><ellipse cx="822.1767499520988" cy="885.664411943702" rx="15.602961335839522" ry="12.484943210430899" fill="#cc8436" fill-opacity="0.3692292676161954"/><ellipse cx="908.9044395021954" cy="739.0884156499299" rx="14.079945140720133" ry="15.299904290638496" fill="#f7d860" fill-opacity="0.4108120983943597"/><ellipse cx="845.0111537377842" cy="737.9431593511474" rx="16.927310025482292" ry="14.523457922649097" fill="#cc8436" fill-opacity="0.43332135939479277"/><ellipse cx="791.2145272128339" cy="968.9955975954053" rx="15.012283854244746" ry="15.537444706428605" fill="#f7d860" fill-opacity="0.36489807352942266"/><ellipse cx="823.805522599086" cy="969.9315280271464" rx="9.097075487174813" ry="8.972975635073446" fill="#f7d860" fill-opacity="0.4105295220687609"/><ellipse cx="629.0184398625953" cy="597.538541980233" rx="16.694721453098957" ry="17.839360171731553" fill="#cc8436" fill-opacity="0.5242566082196918"/><ellipse cx="661.7786495074769" cy="849.543537877744" rx="9.143831983393898" ry="15.062662669256603" fill="#f7d860" fill-opacity="0.541886195666596"/><ellipse cx="759.3027498869087" cy="728.2482107451665" rx="14.65955735586358" ry="9.291728479047034" fill="#f7d860" fill-opacity="0.40788045449940974"/><ellipse cx="806.2420231217436" cy="649.7315564995745" rx="13.18525568337694" ry="17.221508351411856" fill="#cc8436" fill-opacity="0.3048707320130983"/><ellipse cx="821.6200991233312" cy="703.4427939554321" rx="13.314978891419907" ry="16.23927073891864" fill="#cc8436" fill-opacity="0.4280655711158639"/><ellipse cx="641.9118377091327" cy="610.7490643420655" rx="17.78997430067892" ry="12.704460975213092" fill="#cc8436" fill-opacity="0.33238888982641934"/><ellipse cx="768.9016725110645" cy="953.0493225773128" rx="10.068872118350733" ry="9.194943579232625" fill="#f7d860" fill-opacity="0.5297928771279429"/><ellipse cx="828.2379701573016" cy="841.2212466697074" rx="10.575265124409462" ry="16.88205571348548" fill="#cc8436" fill-opacity="0.4063292601989307"/></g></g><g fill="none" stroke="#fff" stroke-width="1.25" stroke-linejoin="round" stroke-opacity="0.95" clip-path="url(#mosc)"><polyline points="642.2,500.0 648.9,508.1 657.8,515.6 660.7,528.9 663.7,542.2 668.1,550.4 672.6,560.0 674.1,565.9 678.5,574.8 680.7,579.3 677.0,582.2 683.0,586.7 688.9,600.0"/><polyline points="602.2,544.4 614.8,545.9 628.1,548.1 641.5,545.9 663.7,542.2"/><polyline points="665.9,495.6 671.1,505.2 678.5,517.0 680.0,520.7 678.5,523.7 685.9,534.1 688.9,533.3 696.3,543.7 709.6,534.8 704.4,528.1 710.4,523.0 712.6,519.3"/><polyline points="668.1,550.4 683.0,546.7 696.3,543.7"/><polyline points="677.0,490.4 691.9,502.2 712.6,519.3 725.9,528.9 737.8,539.3 748.1,548.1 753.3,550.4"/><polyline points="696.3,478.5 705.9,488.9 710.4,483.7 718.5,497.8 727.4,511.1 733.3,517.0 742.2,527.4 752.6,540.7 760.0,548.1"/><polyline points="753.3,550.4 760.0,548.1 770.4,548.9 780.0,550.4"/><polyline points="753.3,550.4 749.6,555.6 733.3,558.5 720.0,560.0 715.6,563.0 709.6,567.4 703.7,568.9 691.9,564.4 680.7,563.0 674.1,565.9"/><polyline points="703.7,568.9 706.7,574.8 711.1,582.2 717.0,594.1 718.5,600.0"/><polyline points="728.9,600.0 727.4,588.1 728.9,577.8 733.3,570.4 742.2,564.4 754.1,557.0 753.3,550.4"/><polyline points="727.4,511.1 731.1,505.2 740.7,502.2 751.9,500.7 752.6,505.2 757.0,514.1 760.0,523.0 760.7,527.4 757.0,528.9 757.8,533.3 762.2,534.8 763.0,542.2 767.4,548.9"/><polyline points="730.4,440.0 733.3,454.8 736.3,460.7 746.7,471.1 757.0,477.0 761.5,488.9 762.2,502.2 763.0,517.0 764.4,528.9 765.9,540.7"/><polyline points="733.3,454.8 751.1,450.4 780.0,448.9"/><polyline points="751.1,440.0 751.1,450.4"/><polyline points="746.7,471.1 745.2,478.5 744.4,484.4 739.3,485.9 739.3,491.9 741.5,496.3 740.7,502.2"/><polyline points="761.5,488.9 780.0,487.4"/><polyline points="780.0,514.8 763.0,517.0"/><polyline points="767.4,548.9 771.9,563.0 774.8,573.3 780.0,582.2"/><polyline points="780.0,561.5 774.8,565.9 774.8,571.9 780.0,573.3"/><polyline points="771.9,573.3 768.9,574.8 768.9,586.7 780.0,600.0"/><polyline points="600.0,540.7 602.2,544.4 603.0,558.5 605.9,573.3 604.4,582.2 614.8,588.1 620.7,600.0"/><polyline points="605.9,573.3 613.3,575.6 622.2,570.4 628.1,568.9 635.6,571.1 648.9,568.9 668.1,565.9 672.6,560.0"/><polyline points="781.1,445.2 778.9,462.2 778.9,485.9 770.0,487.4"/><polyline points="778.9,485.9 786.3,487.4 798.1,499.3 804.1,498.5"/><polyline points="830.7,470.4 820.4,478.5 811.5,484.4 808.5,490.4 803.3,494.8 805.6,499.3 804.8,505.2 808.5,511.1 815.9,517.0 818.9,523.0 821.9,527.4 827.0,523.7 835.2,520.7 835.9,517.0 842.6,511.1 842.6,499.3 847.0,496.3 858.9,494.1 860.4,496.3 866.3,474.8"/><polyline points="808.5,490.4 827.8,491.9 823.3,500.7 842.6,503.7"/><polyline points="860.4,496.3 863.3,503.7 858.9,518.5 867.0,524.4 898.9,489.6"/><polyline points="867.0,524.4 855.9,543.7 850.0,563.0 858.9,565.9"/><polyline points="835.2,520.7 847.0,534.8 855.9,545.9"/><polyline points="770.0,550.4 781.9,551.9 801.1,553.3 809.3,533.3 813.0,534.8 814.4,554.1 835.2,555.6 850.0,563.0 873.7,574.8 903.3,591.1 912.2,600.0"/><polyline points="821.9,527.4 820.4,534.8 813.0,534.8"/><polyline points="823.3,555.6 822.6,565.9 819.6,566.7 821.1,571.9 835.2,580.7 826.3,600.0"/><polyline points="835.2,580.7 840.4,575.6 839.6,580.7 854.4,588.1 855.2,567.4"/><polyline points="854.4,588.1 853.0,600.0"/><polyline points="770.0,516.3 776.7,515.6 777.4,508.9 798.1,499.3"/><polyline points="781.9,551.9 778.9,558.5 780.4,564.4 774.4,567.4 774.4,571.9 780.4,574.1 783.3,570.4 792.2,579.3 793.7,600.0"/><polyline points="770.0,561.5 773.0,570.4 774.4,571.9"/><polyline points="854.4,588.1 866.3,600.0"/><polyline points="913.0,502.2 909.3,506.7 903.3,509.6 897.4,512.6 888.5,524.4 897.4,530.4 900.4,542.2 895.9,551.1 879.6,550.4 873.7,546.7 872.2,542.2 875.2,539.3 869.3,540.7 873.7,548.1 858.9,565.9"/><polyline points="616.7,590.0 621.1,597.4 621.9,603.3 628.5,609.3 638.9,613.7 647.8,615.2 650.7,618.1 651.5,606.3 655.2,609.3 671.5,609.3 680.4,604.1 687.8,603.3 717.4,602.6 729.3,603.3 738.1,609.3 744.1,618.1 753.0,619.6 770.0,615.2"/><polyline points="650.7,618.1 651.5,637.4 657.4,638.1 658.1,641.9 673.0,645.6 690.7,648.5 699.6,646.3 703.3,642.6 716.7,638.9 717.4,624.1 710.0,618.1 717.4,602.6"/><polyline points="687.8,603.3 688.5,609.3 693.7,621.1 699.6,633.0 703.3,642.6 704.8,653.7 708.5,668.5 715.9,681.9 721.9,692.2 732.2,684.8 733.0,680.4 738.1,674.4 745.6,673.0"/><polyline points="687.8,603.3 687.8,595.9 693.7,590.0"/><polyline points="714.4,590.0 716.7,594.4 715.9,598.9 718.9,601.1 717.4,602.6"/><polyline points="744.1,618.1 751.5,633.0 757.4,640.4"/><polyline points="745.6,642.6 736.7,653.0 741.1,656.7 747.0,662.6"/><polyline points="612.2,661.1 616.7,646.3 621.1,641.1 626.3,642.6 630.0,649.3 637.4,650.7 646.3,644.8 651.5,637.4"/><polyline points="612.2,661.1 615.2,668.5 609.3,675.2 594.4,676.7"/><polyline points="615.2,668.5 641.9,670.0 653.7,665.6 659.6,670.0 667.0,686.3 665.6,693.7 658.1,701.1 644.8,708.5 642.6,713.0 646.3,717.4 655.2,721.9 664.1,722.6 673.0,714.4 677.4,702.6 677.4,686.3 680.4,681.1 686.3,678.9 693.7,681.9 702.6,687.8 713.0,695.2 721.9,692.2"/><polyline points="713.0,695.2 717.4,707.0 720.4,713.0 729.3,716.7 738.1,715.9 750.0,707.0 760.4,702.6 770.0,705.6"/><polyline points="634.4,711.5 638.9,708.5 642.6,713.0"/><polyline points="644.8,730.0 649.3,734.4 664.1,729.3 681.9,721.1 690.7,736.7 696.7,750.0"/><polyline points="690.7,736.7 705.6,733.7 713.0,723.3 720.4,713.0"/><polyline points="690.7,736.7 717.4,739.6 735.2,731.5 742.6,744.1 738.1,750.0"/><polyline points="742.6,744.1 757.4,736.7 764.8,723.3 770.0,713.0"/><polyline points="649.3,734.4 652.2,750.0"/><polyline points="784.8,590.0 792.2,600.4 801.1,610.7 811.5,621.1 823.3,634.4 832.2,641.9 842.6,647.8 867.8,657.4 879.6,655.2 888.5,652.2 897.4,649.3 903.3,647.8 912.2,638.9 921.1,638.9"/><polyline points="854.4,590.0 848.5,603.3 842.6,616.7 838.1,625.6"/><polyline points="854.4,590.0 858.9,595.9 869.3,600.4 873.7,607.8 876.7,610.7 882.6,612.2 881.1,624.1 879.6,627.0 885.6,638.9 881.1,647.8 879.6,655.2"/><polyline points="881.1,624.1 891.5,621.1 903.3,618.1 909.3,613.0 916.7,614.4 924.1,612.2"/><polyline points="897.4,590.0 909.3,597.4 918.1,604.8 924.1,612.2 922.6,638.9 921.1,638.9 922.6,664.1 924.1,677.4 926.3,678.9 927.0,684.8 930.7,692.2 944.1,687.0"/><polyline points="924.1,612.2 944.1,603.3"/><polyline points="924.8,625.6 944.1,619.6"/><polyline points="826.3,590.0 824.8,604.8 823.3,619.6 823.3,634.4"/><polyline points="793.0,590.0 794.4,598.9 801.1,610.7"/><polyline points="867.8,657.4 858.9,665.6 850.0,671.5 847.0,677.4 842.6,678.9 835.2,680.4 826.3,684.8 820.4,692.2 817.4,696.7 821.9,702.6 829.3,704.1 839.6,701.9 845.6,702.6 850.0,705.6 855.9,704.1 854.4,695.9 864.8,692.2 867.8,684.8 872.2,678.1 879.6,681.9 893.0,670.0"/><polyline points="893.0,670.0 898.9,681.9 900.4,690.7 898.9,698.1 895.9,704.1"/><polyline points="850.0,705.6 858.9,710.0 867.8,714.4 873.7,718.9 879.6,723.3 878.1,732.2 873.7,742.6"/><polyline points="829.3,704.1 832.2,720.4 833.7,732.2 835.2,742.6 842.6,747.0 847.0,750.0"/><polyline points="813.0,713.0 814.4,723.3 811.5,738.1 810.0,744.1 804.1,747.0 802.6,750.0"/><polyline points="799.6,715.9 796.7,726.3 787.8,738.1 783.3,750.0"/><polyline points="845.6,741.1 850.7,738.9 854.4,747.0"/><polyline points="770.0,641.9 778.9,640.4 781.9,634.4 786.3,619.6 799.6,618.1 811.5,621.1"/><polyline points="778.9,640.4 789.3,641.9 792.2,652.2 804.1,655.2 808.5,667.0 810.0,681.9 811.5,693.7 818.9,690.7 817.4,696.7"/><polyline points="804.1,655.2 805.6,640.4 821.9,640.4 823.3,634.4"/><polyline points="827.8,640.4 830.7,659.6 826.3,670.0 820.4,678.9 818.9,690.7"/><polyline points="770.0,667.0 775.9,670.0 786.3,681.9 799.6,696.7 796.7,701.1 775.9,696.7 770.0,699.6"/><polyline points="799.6,696.7 801.1,707.0 789.3,713.0 770.0,715.9"/><polyline points="895.9,704.1 900.4,708.5 912.2,713.0 927.0,704.1 944.1,696.7"/><polyline points="912.2,713.0 909.3,723.3 895.9,732.2 882.6,720.4 879.6,723.3"/><polyline points="912.2,713.0 915.2,718.9 933.0,729.3 944.1,732.2"/><polyline points="650.7,745.9 655.2,759.3 658.1,772.6 667.0,769.6 668.5,766.7 671.5,759.3 678.9,756.3 686.3,762.2 692.2,759.3 698.1,751.9 692.2,740.0"/><polyline points="698.1,751.9 715.9,740.0"/><polyline points="692.2,759.3 690.7,769.6 681.9,780.0 673.0,790.4 669.3,797.8 673.0,805.2 678.9,812.6 684.8,818.5 689.3,809.6 693.7,812.6 698.1,809.6 707.0,811.1 708.5,823.0 717.4,814.1 726.3,806.7 738.1,791.9 753.0,774.1"/><polyline points="741.1,740.0 738.1,748.9 738.1,759.3 742.6,766.7 753.0,774.1 770.0,768.1"/><polyline points="678.9,812.6 662.6,831.9 649.3,842.2 638.9,850.4"/><polyline points="678.9,812.6 675.9,821.5 681.9,828.9 686.3,837.8 693.7,839.3 699.6,842.2 705.6,849.6 720.4,833.3 708.5,823.0"/><polyline points="720.4,833.3 726.3,837.8 729.3,841.5 736.7,840.7 741.1,833.3 749.3,837.8 734.4,861.5 721.9,858.5 717.4,863.0"/><polyline points="726.3,806.7 744.1,820.7 748.5,815.6 770.0,790.4"/><polyline points="744.1,820.7 741.1,833.3"/><polyline points="748.5,815.6 770.0,834.8"/><polyline points="705.6,849.6 696.7,860.0 684.8,871.1 661.1,889.6"/><polyline points="684.8,871.1 699.6,883.0 717.4,895.6 718.9,900.0"/><polyline points="699.6,883.0 708.5,871.9 711.5,873.3 717.4,863.0"/><polyline points="734.4,861.5 757.4,871.1 770.0,876.3"/><polyline points="757.4,871.1 753.0,880.7 741.1,889.6 738.1,900.0"/><polyline points="770.0,848.1 757.4,871.1"/><polyline points="610.7,790.4 619.6,778.5 625.6,780.7 628.5,777.0 635.9,781.5 650.7,776.3 652.2,774.1 658.1,772.6"/><polyline points="625.6,823.0 613.7,831.9 612.2,836.3 619.6,846.7 622.6,850.4 638.9,850.4"/><polyline points="590.0,849.6 604.8,854.1 622.6,850.4"/><polyline points="590.0,743.0 650.7,745.9"/><polyline points="847.0,740.0 848.5,754.8 851.5,769.6 851.5,788.9 850.0,811.1 848.5,828.9 844.1,843.7 839.6,854.1 839.6,861.5 846.3,870.4 850.7,864.4 855.9,860.0"/><polyline points="851.5,788.9 858.9,791.9 873.7,794.8 885.6,799.3 891.5,805.2 893.7,812.6 893.0,820.0 887.0,825.9 876.7,831.9 866.3,837.8 858.9,843.7 855.9,852.6 855.9,860.0 858.9,865.9 867.8,873.3 875.9,880.0 888.5,885.2 894.4,887.4 907.8,885.9 924.1,886.7 950.0,874.8"/><polyline points="875.9,880.0 885.6,865.9 895.9,854.1 903.3,842.2 909.3,825.9 913.0,811.1 910.7,791.9 909.3,781.5 907.8,769.6"/><polyline points="913.0,811.1 912.2,803.7 918.1,803.7 924.1,805.9 933.0,805.2 937.4,808.1 950.0,812.6"/><polyline points="895.9,854.1 900.4,853.3 906.3,859.3 918.1,851.1 928.5,843.7 938.9,840.0 950.0,843.7"/><polyline points="863.3,766.7 872.2,763.0"/><polyline points="863.3,766.7 867.8,778.5 873.7,780.0 868.5,793.3"/><polyline points="803.3,756.3 818.9,754.1 832.2,753.3 830.7,744.4 836.7,743.0 842.6,746.7 847.0,747.4"/><polyline points="803.3,756.3 804.1,760.7 798.1,763.7 796.7,772.6 800.4,781.5 804.1,782.2 814.4,780.0 817.4,783.0 816.7,799.3 818.9,808.1 823.3,812.6 829.3,814.1 850.0,812.6"/><polyline points="803.3,756.3 801.9,754.8 784.8,757.8 781.9,763.7 775.9,771.1 770.0,766.7"/><polyline points="775.9,771.1 780.4,778.5 778.9,781.5 784.8,791.9 792.2,803.7 810.0,805.2 812.2,823.0 813.7,834.8 810.0,846.7 812.2,858.5 813.0,882.2 814.4,900.0"/><polyline points="792.2,803.7 786.3,811.1 778.9,823.0 771.5,828.9 777.4,837.8 773.0,846.7 801.9,845.9 795.2,834.8 797.4,827.4 807.0,815.6 796.7,814.1 794.4,805.2"/><polyline points="801.9,845.9 796.7,858.5 795.2,868.9 795.9,883.7"/><polyline points="812.2,858.5 821.9,861.5 829.3,857.0 839.6,864.4 846.3,870.4"/><polyline points="814.4,887.4 827.8,886.7 829.3,888.9 839.6,891.1 867.8,892.6 873.7,900.0"/><polyline points="907.8,885.9 909.3,894.1"/><polyline points="781.9,740.0 777.4,751.9 770.0,766.7"/><polyline points="804.1,740.0 808.5,744.4 805.6,747.4 805.6,754.8"/><polyline points="658.5,890.8 671.0,883.3 676.0,880.0"/><polyline points="666.0,880.0 696.0,885.0 717.7,896.7 709.3,910.0 701.0,921.7 689.3,936.7"/><polyline points="709.3,910.0 721.0,913.3 734.3,905.0 739.3,890.0 747.7,883.3 756.0,880.0"/><polyline points="767.7,916.7 771.0,920.0 769.3,928.3 762.7,938.3 766.0,941.7 772.7,944.2 796.0,943.3 799.3,936.7 819.3,943.3 827.7,935.0 812.7,915.0 802.7,915.0 767.7,916.7"/><polyline points="812.7,915.0 814.3,888.3 812.7,880.0"/><polyline points="814.3,888.3 869.3,895.0 861.0,910.0 857.7,918.3 827.7,935.0"/><polyline points="827.7,935.0 837.7,955.0 844.3,975.0 849.3,995.0"/><polyline points="819.3,943.3 809.3,956.7 802.7,973.3 802.7,991.7"/><polyline points="772.7,944.2 769.3,953.3 771.0,963.3 767.7,980.0 789.3,990.8 792.7,1003.3"/><polyline points="767.7,980.0 742.7,975.0"/><polyline points="789.3,990.8 802.7,991.7"/><polyline points="869.3,895.0 872.7,905.0 892.7,900.0 906.0,898.3"/><polyline points="861.0,910.0 862.7,923.3 867.7,933.3 877.7,940.0 892.7,935.0 912.7,930.0 939.3,926.7 952.7,921.7"/><polyline points="877.7,940.0 886.0,951.7 896.0,958.3 906.0,966.7"/><polyline points="949.3,880.0 954.3,896.7 962.7,913.3"/><polyline points="615.4,421.9 599.2,434.6 587.7,432.3"/><polyline points="627.0,382.5 601.6,383.7"/></g></g><circle cx="628.4" cy="528.2" r="14.4" fill="#7fb5e6" fill-opacity="0.88"/><circle cx="711" cy="528.2" r="23" fill="#6ea8de" fill-opacity="0.86"/><circle cx="818.7" cy="540.5" r="29.6" fill="#5a90cc" fill-opacity="0.88"/><circle cx="794" cy="666.7" r="49.8" fill="#14469a" fill-opacity="0.9"/><circle cx="869" cy="642.6" r="34.5" fill="#4a80c0" fill-opacity="0.88"/><circle cx="913" cy="741" r="47.5" fill="#1a4a9a" fill-opacity="0.9"/><circle cx="688.4" cy="673" r="19.4" fill="#6ea8de" fill-opacity="0.86"/><circle cx="628.4" cy="749" r="12.3" fill="#86bbea" fill-opacity="0.9"/><circle cx="715" cy="845.7" r="23" fill="#6ea8de" fill-opacity="0.88"/><circle cx="782" cy="889.7" r="26" fill="#6ea8de" fill-opacity="0.88"/><circle cx="796" cy="964" r="12.8" fill="#86bbea" fill-opacity="0.9"/><circle cx="912.7" cy="912" r="22.5" fill="#6ea8de" fill-opacity="0.88"/><rect x="571.5" y="470" width="8.5" height="210" fill="#fff" fill-opacity="0.55" stroke="#bdbdbd" stroke-width="0.8"/><rect x="559" y="446.5" width="35" height="34.5" rx="3" fill="#fff" stroke="#d9d9d9" stroke-width="0.6"/><rect x="559" y="669.5" width="35" height="34.5" rx="3" fill="#fff" stroke="#d9d9d9" stroke-width="0.6"/><path d="M568 464.2H584.6M576.3 455.4V472.8" stroke="#4d4d4d" stroke-width="4.6"/><path d="M568 686.2H584.6" stroke="#6a6a6a" stroke-width="4.6"/><rect x="559" y="570.3" width="35" height="18.2" rx="3" fill="#fff" stroke="#d9d9d9" stroke-width="0.6"/><rect x="570.6" y="577.4" width="1.3" height="1.3" fill="#999"/><rect x="570.6" y="580.4" width="1.3" height="1.3" fill="#999"/><rect x="574.0" y="577.4" width="1.3" height="1.3" fill="#999"/><rect x="574.0" y="580.4" width="1.3" height="1.3" fill="#999"/><rect x="577.4" y="577.4" width="1.3" height="1.3" fill="#999"/><rect x="577.4" y="580.4" width="1.3" height="1.3" fill="#999"/><rect x="580.8000000000001" y="577.4" width="1.3" height="1.3" fill="#999"/><rect x="580.8000000000001" y="580.4" width="1.3" height="1.3" fill="#999"/></svg>
<div class="b" style="left:944px;top:342px;width:225px;height:482px;background:#fff;border-radius:4px;"></div>
<div class="b" style="left:944px;top:553px;width:225px;height:1px;background:#e6e6e6;"></div>
<div class="b" style="left:944px;top:687px;width:225px;height:1px;background:#e6e6e6;"></div>
<span id="t34" class="t" style="left:954.0px;top:363.7px;font-size:15.5px;color:#1f1f1f;font-weight:700;letter-spacing:-0.047px;">Магазины</span>
<span id="t35" class="t" style="left:954.0px;top:396.5px;font-size:15.5px;color:#8c8c8c;letter-spacing:0.188px;">Продажа, ₽</span>
<div class="b" style="left:954px;top:424px;width:205px;height:9.7px;background:linear-gradient(90deg,#8ccafe 0%,#5596de 45%,#0a3a96 100%);border-radius:2px;"></div>
<span id="t36" class="t" style="left:954.0px;top:445.5px;font-size:16px;color:#262626;letter-spacing:0.141px;">2,5M</span>
<span id="t37" class="t" style="left:1091.5px;top:445.5px;font-size:16px;color:#262626;letter-spacing:0.133px;">8,78M</span>
<span id="t38" class="t" style="left:954.0px;top:480.6px;font-size:15.5px;color:#8c8c8c;letter-spacing:0.460px;">Число клиентов</span>
<svg class="b" style="left:960px;top:494px" width="195" height="22" viewBox="960 494 195 22"><path d="M967.5 508.9L1146.5 499V511.6H967.5Z" fill="#fff" stroke="#262626" stroke-width="1"/></svg>
<span id="t39" class="t" style="left:954.0px;top:517.9px;font-size:16px;color:#262626;letter-spacing:-0.352px;">562</span>
<span id="t40" class="t" style="left:1091.5px;top:517.9px;font-size:16px;color:#262626;letter-spacing:-0.078px;">1,14K</span>
<span id="t41" class="t" style="left:954.0px;top:570.9px;font-size:15.5px;color:#1f1f1f;font-weight:700;letter-spacing:-0.572px;">Районы</span>
<span id="t42" class="t" style="left:954.0px;top:603.9px;font-size:15.5px;color:#8c8c8c;letter-spacing:0.188px;">Продажа, ₽</span>
<div class="b" style="left:954px;top:631px;width:205px;height:9.7px;background:linear-gradient(90deg,#f7d75e 0%,#d99c3c 50%,#8f4212 100%);border-radius:2px;"></div>
<span id="t43" class="t" style="left:954.0px;top:651.8px;font-size:16px;color:#262626;letter-spacing:-0.044px;">30,39K</span>
<span id="t44" class="t" style="left:1091.5px;top:651.8px;font-size:16px;color:#262626;letter-spacing:0.133px;">2,23M</span>
<span id="t45" class="t" style="left:954.0px;top:703.9px;font-size:15.5px;color:#1f1f1f;font-weight:700;letter-spacing:-0.193px;">Клиенты</span>
<span id="t46" class="t" style="left:954.0px;top:738.3px;font-size:15.5px;color:#8c8c8c;letter-spacing:0.485px;">Доставка (точка)</span>
<div class="b" style="left:954px;top:766px;width:205px;height:9.7px;background:linear-gradient(90deg,#8df84a 0%,#fdf92a 33%,#f0a03c 58%,#e6574a 75%,#9c1c1c 100%);border-radius:2px;"></div>
<span id="t47" class="t" style="left:954.0px;top:787.5px;font-size:16px;color:#262626;letter-spacing:0.359px;">min</span>
<span id="t48" class="t" style="left:1091.5px;top:787.5px;font-size:16px;color:#262626;letter-spacing:0.133px;">max</span>
<div class="b" style="left:1191px;top:256px;width:684px;height:380px;background:#fff;border-radius:3px;"></div>
<span id="t49" class="t" style="left:1211.5px;top:272.7px;font-size:19px;color:#1f1f1f;-webkit-text-stroke:0.25px #1f1f1f;letter-spacing:0.153px;">Динамика продаж по категориям продуктов</span>
<svg class="b" style="left:1831.5px;top:281px" width="22" height="6" viewBox="0 0 22 6"><circle cx="3" cy="3" r="2.1" fill="#6b6b6b"/><circle cx="11" cy="3" r="2.1" fill="#6b6b6b"/><circle cx="19" cy="3" r="2.1" fill="#6b6b6b"/></svg>
<svg class="b" style="left:0;top:0" width="1920" height="1080" viewBox="0 0 1920 1080"><path d="M1243.8 484.5H1862.7" stroke="#e6e6e6" stroke-width="1"/><path d="M1243.8 431.5H1862.7" stroke="#e6e6e6" stroke-width="1"/><path d="M1243.8 377.5H1862.7" stroke="#e6e6e6" stroke-width="1"/><path d="M1243.8 323.5H1862.7" stroke="#e6e6e6" stroke-width="1"/><path d="M1300.5 322.7V549.4" stroke="#e6e6e6" stroke-width="1"/><path d="M1405.5 322.7V549.4" stroke="#e6e6e6" stroke-width="1"/><path d="M1509.5 322.7V549.4" stroke="#e6e6e6" stroke-width="1"/><path d="M1614.5 322.7V549.4" stroke="#e6e6e6" stroke-width="1"/><path d="M1717.5 322.7V549.4" stroke="#e6e6e6" stroke-width="1"/><path d="M1822.5 322.7V549.4" stroke="#e6e6e6" stroke-width="1"/><polygon points="1249.3,512.7 1266.4,505.6 1284.1,502.3 1301.2,504.9 1318.9,498.9 1336.6,493.4 1353.7,486.1 1371.4,489.7 1388.5,479.5 1406.2,473.0 1423.9,482.7 1440.5,471.9 1458.1,470.1 1475.3,465.7 1493.0,466.4 1510.1,462.4 1527.8,450.2 1545.4,460.2 1562.6,452.4 1580.3,444.2 1597.4,438.0 1615.1,433.1 1632.8,448.0 1648.7,424.0 1666.4,429.1 1683.5,428.4 1701.2,421.4 1718.3,407.0 1736.0,406.5 1753.7,407.0 1770.8,408.1 1788.5,401.0 1805.6,405.9 1823.3,398.8 1841.0,398.8 1857.0,375.5 1857.0,394.1 1841.0,415.6 1823.3,416.3 1805.6,423.2 1788.5,417.8 1770.8,424.7 1753.7,424.7 1736.0,422.0 1718.3,423.2 1701.2,436.4 1683.5,442.6 1666.4,442.4 1648.7,436.4 1632.8,458.6 1615.1,445.8 1597.4,450.6 1580.3,455.1 1562.6,462.4 1545.4,469.1 1527.8,461.3 1510.1,471.7 1493.0,475.7 1475.3,473.5 1458.1,478.5 1440.5,479.0 1423.9,489.0 1406.2,480.8 1388.5,486.3 1371.4,495.6 1353.7,491.9 1336.6,498.5 1318.9,503.4 1301.2,508.9 1284.1,506.7 1266.4,508.9 1249.3,516.2" fill="#4da2f1" fill-opacity="0.75"/><polyline points="1249.3,512.7 1266.4,505.6 1284.1,502.3 1301.2,504.9 1318.9,498.9 1336.6,493.4 1353.7,486.1 1371.4,489.7 1388.5,479.5 1406.2,473.0 1423.9,482.7 1440.5,471.9 1458.1,470.1 1475.3,465.7 1493.0,466.4 1510.1,462.4 1527.8,450.2 1545.4,460.2 1562.6,452.4 1580.3,444.2 1597.4,438.0 1615.1,433.1 1632.8,448.0 1648.7,424.0 1666.4,429.1 1683.5,428.4 1701.2,421.4 1718.3,407.0 1736.0,406.5 1753.7,407.0 1770.8,408.1 1788.5,401.0 1805.6,405.9 1823.3,398.8 1841.0,398.8 1857.0,375.5" fill="none" stroke="#4da2f1" stroke-width="2" stroke-linejoin="round"/><polygon points="1249.3,516.2 1266.4,508.9 1284.1,506.7 1301.2,508.9 1318.9,503.4 1336.6,498.5 1353.7,491.9 1371.4,495.6 1388.5,486.3 1406.2,480.8 1423.9,489.0 1440.5,479.0 1458.1,478.5 1475.3,473.5 1493.0,475.7 1510.1,471.7 1527.8,461.3 1545.4,469.1 1562.6,462.4 1580.3,455.1 1597.4,450.6 1615.1,445.8 1632.8,458.6 1648.7,436.4 1666.4,442.4 1683.5,442.6 1701.2,436.4 1718.3,423.2 1736.0,422.0 1753.7,424.7 1770.8,424.7 1788.5,417.8 1805.6,423.2 1823.3,416.3 1841.0,415.6 1857.0,394.1 1857.0,451.7 1841.0,463.5 1823.3,463.9 1805.6,468.6 1788.5,463.1 1770.8,469.5 1753.7,466.8 1736.0,470.1 1718.3,468.4 1701.2,479.0 1683.5,481.2 1666.4,478.3 1648.7,479.0 1632.8,491.2 1615.1,480.5 1597.4,487.2 1580.3,486.1 1562.6,491.9 1545.4,494.5 1527.8,491.6 1510.1,498.5 1493.0,498.9 1475.3,496.1 1458.1,500.5 1440.5,501.2 1423.9,509.4 1406.2,505.1 1388.5,507.1 1371.4,514.5 1353.7,508.9 1336.6,513.4 1318.9,516.2 1301.2,522.7 1284.1,517.8 1266.4,518.9 1249.3,525.1" fill="#ff3d64" fill-opacity="0.75"/><polyline points="1249.3,516.2 1266.4,508.9 1284.1,506.7 1301.2,508.9 1318.9,503.4 1336.6,498.5 1353.7,491.9 1371.4,495.6 1388.5,486.3 1406.2,480.8 1423.9,489.0 1440.5,479.0 1458.1,478.5 1475.3,473.5 1493.0,475.7 1510.1,471.7 1527.8,461.3 1545.4,469.1 1562.6,462.4 1580.3,455.1 1597.4,450.6 1615.1,445.8 1632.8,458.6 1648.7,436.4 1666.4,442.4 1683.5,442.6 1701.2,436.4 1718.3,423.2 1736.0,422.0 1753.7,424.7 1770.8,424.7 1788.5,417.8 1805.6,423.2 1823.3,416.3 1841.0,415.6 1857.0,394.1" fill="none" stroke="#ff3d64" stroke-width="2" stroke-linejoin="round"/><polygon points="1249.3,525.1 1266.4,518.9 1284.1,517.8 1301.2,522.7 1318.9,516.2 1336.6,513.4 1353.7,508.9 1371.4,514.5 1388.5,507.1 1406.2,505.1 1423.9,509.4 1440.5,501.2 1458.1,500.5 1475.3,496.1 1493.0,498.9 1510.1,498.5 1527.8,491.6 1545.4,494.5 1562.6,491.9 1580.3,486.1 1597.4,487.2 1615.1,480.5 1632.8,491.2 1648.7,479.0 1666.4,478.3 1683.5,481.2 1701.2,479.0 1718.3,468.4 1736.0,470.1 1753.7,466.8 1770.8,469.5 1788.5,463.1 1805.6,468.6 1823.3,463.9 1841.0,463.5 1857.0,451.7 1857.0,538.4 1249.3,538.4" fill="#8ad554" fill-opacity="0.75"/><polyline points="1249.3,525.1 1266.4,518.9 1284.1,517.8 1301.2,522.7 1318.9,516.2 1336.6,513.4 1353.7,508.9 1371.4,514.5 1388.5,507.1 1406.2,505.1 1423.9,509.4 1440.5,501.2 1458.1,500.5 1475.3,496.1 1493.0,498.9 1510.1,498.5 1527.8,491.6 1545.4,494.5 1562.6,491.9 1580.3,486.1 1597.4,487.2 1615.1,480.5 1632.8,491.2 1648.7,479.0 1666.4,478.3 1683.5,481.2 1701.2,479.0 1718.3,468.4 1736.0,470.1 1753.7,466.8 1770.8,469.5 1788.5,463.1 1805.6,468.6 1823.3,463.9 1841.0,463.5 1857.0,451.7" fill="none" stroke="#8ad554" stroke-width="2" stroke-linejoin="round"/><path d="M1243.8 538.9H1862.7" stroke="#dcdcdc" stroke-width="1.4"/><circle cx="1293.7" cy="597.3" r="7.4" fill="#4da2f1"/><circle cx="1456.7" cy="597.3" r="7.4" fill="#ff3d64"/><circle cx="1629" cy="597.3" r="7.4" fill="#8ad554"/></svg>
<span id="t50" class="t" style="left:1225.0px;top:530.7px;font-size:14px;color:#8f8f8f;letter-spacing:1.203px;transform:translateX(-100%);margin-left:1.203px;">0</span>
<span id="t51" class="t" style="left:1225.0px;top:476.8px;font-size:14px;color:#8f8f8f;letter-spacing:0.547px;transform:translateX(-100%);margin-left:0.547px;">1M</span>
<span id="t52" class="t" style="left:1225.0px;top:422.9px;font-size:14px;color:#8f8f8f;letter-spacing:0.547px;transform:translateX(-100%);margin-left:0.547px;">2M</span>
<span id="t53" class="t" style="left:1225.0px;top:369.0px;font-size:14px;color:#8f8f8f;letter-spacing:0.547px;transform:translateX(-100%);margin-left:0.547px;">3M</span>
<span id="t54" class="t" style="left:1225.0px;top:315.0px;font-size:14px;color:#8f8f8f;letter-spacing:0.547px;transform:translateX(-100%);margin-left:0.547px;">4M</span>
<span id="t55" class="t" style="left:1301.2px;top:549.4px;font-size:14px;color:#8f8f8f;letter-spacing:0.406px;transform:translateX(-50%);margin-left:0.203px;">Июл '19</span>
<span id="t56" class="t" style="left:1406.2px;top:549.4px;font-size:14px;color:#8f8f8f;letter-spacing:0.180px;transform:translateX(-50%);margin-left:0.090px;">Янв '20</span>
<span id="t57" class="t" style="left:1510.1px;top:549.4px;font-size:14px;color:#8f8f8f;letter-spacing:0.406px;transform:translateX(-50%);margin-left:0.203px;">Июл '20</span>
<span id="t58" class="t" style="left:1615.1px;top:549.4px;font-size:14px;color:#8f8f8f;letter-spacing:0.180px;transform:translateX(-50%);margin-left:0.090px;">Янв '21</span>
<span id="t59" class="t" style="left:1718.3px;top:549.4px;font-size:14px;color:#8f8f8f;letter-spacing:0.406px;transform:translateX(-50%);margin-left:0.203px;">Июл '21</span>
<span id="t60" class="t" style="left:1823.3px;top:549.4px;font-size:14px;color:#8f8f8f;letter-spacing:0.180px;transform:translateX(-50%);margin-left:0.090px;">Янв '22</span>
<span id="t61" class="t" style="left:1310.4px;top:590.8px;font-size:15px;color:#8f8f8f;letter-spacing:0.267px;">Бытовая химия</span>
<span id="t62" class="t" style="left:1473.3px;top:590.8px;font-size:15px;color:#8f8f8f;letter-spacing:0.188px;">Бытовые товары</span>
<span id="t63" class="t" style="left:1645.6px;top:590.8px;font-size:15px;color:#8f8f8f;letter-spacing:0.703px;">Техника для дома</span>
<div class="b" style="left:1191px;top:646px;width:684px;height:412px;background:#fff;border-radius:3px;"></div>
<span id="t64" class="t" style="left:1212.0px;top:663.3px;font-size:19px;color:#1f1f1f;-webkit-text-stroke:0.25px #1f1f1f;letter-spacing:0.057px;">Продажи по магазинам</span>
<svg class="b" style="left:1831.5px;top:671px" width="22" height="6" viewBox="0 0 22 6"><circle cx="3" cy="3" r="2.1" fill="#6b6b6b"/><circle cx="11" cy="3" r="2.1" fill="#6b6b6b"/><circle cx="19" cy="3" r="2.1" fill="#6b6b6b"/></svg>
<svg class="b" style="left:1213px;top:713px" width="18" height="17" viewBox="0 0 18 17"><path d="M15.5 8H2.5M8 2.2L2.2 8L8 13.8" fill="none" stroke="#8c8c8c" stroke-width="1.7"/></svg>
<svg class="b" style="left:1247px;top:713px" width="18" height="17" viewBox="0 0 18 17"><path d="M2 8H15.5M10 2.2L15.8 8L10 13.8" fill="none" stroke="#262626" stroke-width="1.7"/></svg>
<div class="b" style="left:1281px;top:706px;width:1px;height:30px;background:#ececec;"></div>
<span id="t65" class="t" style="left:1297.5px;top:712.8px;font-size:16px;color:#8c8c8c;">/</span>
<span id="t66" class="t" style="left:1314.0px;top:712.8px;font-size:16px;color:#2e2e2e;letter-spacing:0.547px;">Магазин</span>
<svg class="b" style="left:0;top:0" width="1920" height="1080" viewBox="0 0 1920 1080"><path d="M1256 921.5H1862.7" stroke="#e6e6e6" stroke-width="1"/><path d="M1256 865.5H1862.7" stroke="#e6e6e6" stroke-width="1"/><path d="M1256 809.5H1862.7" stroke="#e6e6e6" stroke-width="1"/><path d="M1256 753.5H1862.7" stroke="#e6e6e6" stroke-width="1"/><path d="M1280.5 752.7V976.5" stroke="#e6e6e6" stroke-width="1"/><path d="M1331.5 752.7V976.5" stroke="#e6e6e6" stroke-width="1"/><path d="M1381.5 752.7V976.5" stroke="#e6e6e6" stroke-width="1"/><path d="M1432.5 752.7V976.5" stroke="#e6e6e6" stroke-width="1"/><path d="M1483.5 752.7V976.5" stroke="#e6e6e6" stroke-width="1"/><path d="M1533.5 752.7V976.5" stroke="#e6e6e6" stroke-width="1"/><path d="M1584.5 752.7V976.5" stroke="#e6e6e6" stroke-width="1"/><path d="M1634.5 752.7V976.5" stroke="#e6e6e6" stroke-width="1"/><path d="M1685.5 752.7V976.5" stroke="#e6e6e6" stroke-width="1"/><path d="M1735.5 752.7V976.5" stroke="#e6e6e6" stroke-width="1"/><path d="M1786.5 752.7V976.5" stroke="#e6e6e6" stroke-width="1"/><path d="M1836.5 752.7V976.5" stroke="#e6e6e6" stroke-width="1"/><rect x="1270.2" y="781.8" width="23.6" height="137.0" fill="#4da2f1"/><rect x="1270.2" y="919.8" width="23.6" height="56.7" fill="#ff3d64"/><rect x="1320.2" y="791.1" width="23.6" height="126.6" fill="#4da2f1"/><rect x="1320.2" y="918.7" width="23.6" height="57.8" fill="#ff3d64"/><rect x="1370.2" y="840.0" width="23.6" height="98.8" fill="#4da2f1"/><rect x="1370.2" y="939.8" width="23.6" height="36.7" fill="#ff3d64"/><rect x="1421.3" y="861.1" width="23.6" height="81.7" fill="#4da2f1"/><rect x="1421.3" y="943.8" width="23.6" height="32.7" fill="#ff3d64"/><rect x="1471.3" y="872.4" width="23.6" height="71.5" fill="#4da2f1"/><rect x="1471.3" y="944.9" width="23.6" height="31.6" fill="#ff3d64"/><rect x="1522.6" y="877.3" width="23.6" height="69.3" fill="#66b6fb"/><rect x="1522.6" y="947.6" width="23.6" height="28.9" fill="#ff5680"/><rect x="1572.6" y="882.9" width="23.6" height="65.9" fill="#4da2f1"/><rect x="1572.6" y="949.8" width="23.6" height="26.7" fill="#ff3d64"/><rect x="1622.6" y="888.4" width="23.6" height="59.3" fill="#4da2f1"/><rect x="1622.6" y="948.7" width="23.6" height="27.8" fill="#ff3d64"/><rect x="1674.0" y="889.3" width="23.6" height="63.1" fill="#4da2f1"/><rect x="1674.0" y="953.4" width="23.6" height="23.1" fill="#ff3d64"/><rect x="1724.0" y="908.9" width="23.6" height="43.9" fill="#4da2f1"/><rect x="1724.0" y="953.8" width="23.6" height="22.7" fill="#ff3d64"/><rect x="1775.3" y="910.0" width="23.6" height="43.9" fill="#4da2f1"/><rect x="1775.3" y="954.9" width="23.6" height="21.6" fill="#ff3d64"/><rect x="1825.3" y="914.0" width="23.6" height="42.2" fill="#4da2f1"/><rect x="1825.3" y="957.2" width="23.6" height="19.3" fill="#ff3d64"/><path d="M1256 977.0H1862.7" stroke="#dcdcdc" stroke-width="1.4"/><text x="1279.5" y="988.5" transform="rotate(-45 1279.5 988.5)" text-anchor="end" dominant-baseline="hanging" font-family="Liberation Sans, sans-serif" font-size="14.5" fill="#8f8f8f" letter-spacing="0.3">Бета</text><text x="1329.5" y="988.5" transform="rotate(-45 1329.5 988.5)" text-anchor="end" dominant-baseline="hanging" font-family="Liberation Sans, sans-serif" font-size="14.5" fill="#8f8f8f" letter-spacing="0.3">Дзета</text><text x="1379.5" y="988.5" transform="rotate(-45 1379.5 988.5)" text-anchor="end" dominant-baseline="hanging" font-family="Liberation Sans, sans-serif" font-size="14.5" fill="#8f8f8f" letter-spacing="0.3">Каппа</text><text x="1430.6" y="988.5" transform="rotate(-45 1430.6 988.5)" text-anchor="end" dominant-baseline="hanging" font-family="Liberation Sans, sans-serif" font-size="14.5" fill="#8f8f8f" letter-spacing="0.3">Гамма</text><text x="1480.6" y="988.5" transform="rotate(-45 1480.6 988.5)" text-anchor="end" dominant-baseline="hanging" font-family="Liberation Sans, sans-serif" font-size="14.5" fill="#8f8f8f" letter-spacing="0.3">Дельта</text><text x="1531.9" y="988.5" transform="rotate(-45 1531.9 988.5)" text-anchor="end" dominant-baseline="hanging" font-family="Liberation Sans, sans-serif" font-size="14.5" fill="#8f8f8f" letter-spacing="0.3">Эпсилон</text><text x="1581.9" y="988.5" transform="rotate(-45 1581.9 988.5)" text-anchor="end" dominant-baseline="hanging" font-family="Liberation Sans, sans-serif" font-size="14.5" fill="#8f8f8f" letter-spacing="0.3">Омега</text><text x="1631.9" y="988.5" transform="rotate(-45 1631.9 988.5)" text-anchor="end" dominant-baseline="hanging" font-family="Liberation Sans, sans-serif" font-size="14.5" fill="#8f8f8f" letter-spacing="0.3">Тау</text><text x="1683.3" y="988.5" transform="rotate(-45 1683.3 988.5)" text-anchor="end" dominant-baseline="hanging" font-family="Liberation Sans, sans-serif" font-size="14.5" fill="#8f8f8f" letter-spacing="0.3">Сигма</text><text x="1733.3" y="988.5" transform="rotate(-45 1733.3 988.5)" text-anchor="end" dominant-baseline="hanging" font-family="Liberation Sans, sans-serif" font-size="14.5" fill="#8f8f8f" letter-spacing="0.3">Эта</text><text x="1784.6" y="988.5" transform="rotate(-45 1784.6 988.5)" text-anchor="end" dominant-baseline="hanging" font-family="Liberation Sans, sans-serif" font-size="14.5" fill="#8f8f8f" letter-spacing="0.3">Альфа</text><text x="1834.6" y="988.5" transform="rotate(-45 1834.6 988.5)" text-anchor="end" dominant-baseline="hanging" font-family="Liberation Sans, sans-serif" font-size="14.5" fill="#8f8f8f" letter-spacing="0.3">Йота</text></svg>
<span id="t67" class="t" style="left:1237.8px;top:968.8px;font-size:14px;color:#8f8f8f;letter-spacing:1.203px;transform:translateX(-100%);margin-left:1.203px;">0</span>
<span id="t68" class="t" style="left:1237.8px;top:912.9px;font-size:14px;color:#8f8f8f;letter-spacing:0.792px;transform:translateX(-100%);margin-left:0.792px;">2,5M</span>
<span id="t69" class="t" style="left:1237.8px;top:856.9px;font-size:14px;color:#8f8f8f;letter-spacing:0.547px;transform:translateX(-100%);margin-left:0.547px;">5M</span>
<span id="t70" class="t" style="left:1237.8px;top:801.0px;font-size:14px;color:#8f8f8f;letter-spacing:0.792px;transform:translateX(-100%);margin-left:0.792px;">7,5M</span>
<span id="t71" class="t" style="left:1237.8px;top:745.0px;font-size:14px;color:#8f8f8f;letter-spacing:0.383px;transform:translateX(-100%);margin-left:0.383px;">10M</span>
<span id="t72" class="t" style="left:1282.0px;top:844.2px;font-size:13.6px;color:#1a2a3a;-webkit-text-stroke:0.3px #1a2a3a;letter-spacing:-0.391px;transform:translateX(-50%);margin-left:-0.195px;">6M</span>
<span id="t73" class="t" style="left:1282.0px;top:941.6px;font-size:13.6px;color:#2a1016;-webkit-text-stroke:0.3px #2a1016;letter-spacing:-0.391px;transform:translateX(-50%);margin-left:-0.195px;">3M</span>
<span id="t74" class="t" style="left:1332.0px;top:848.3px;font-size:13.6px;color:#1a2a3a;-webkit-text-stroke:0.3px #1a2a3a;letter-spacing:-0.391px;transform:translateX(-50%);margin-left:-0.195px;">6M</span>
<span id="t75" class="t" style="left:1332.0px;top:941.0px;font-size:13.6px;color:#2a1016;-webkit-text-stroke:0.3px #2a1016;letter-spacing:-0.391px;transform:translateX(-50%);margin-left:-0.195px;">3M</span>
<span id="t76" class="t" style="left:1382.0px;top:883.3px;font-size:13.6px;color:#1a2a3a;-webkit-text-stroke:0.3px #1a2a3a;letter-spacing:-0.391px;transform:translateX(-50%);margin-left:-0.195px;">4M</span>
<span id="t77" class="t" style="left:1382.0px;top:951.6px;font-size:13.6px;color:#2a1016;-webkit-text-stroke:0.3px #2a1016;letter-spacing:-0.391px;transform:translateX(-50%);margin-left:-0.195px;">2M</span>
<span id="t78" class="t" style="left:1433.1px;top:895.9px;font-size:13.6px;color:#1a2a3a;-webkit-text-stroke:0.3px #1a2a3a;letter-spacing:-0.391px;transform:translateX(-50%);margin-left:-0.195px;">4M</span>
<span id="t79" class="t" style="left:1433.1px;top:953.6px;font-size:13.6px;color:#2a1016;-webkit-text-stroke:0.3px #2a1016;letter-spacing:-0.391px;transform:translateX(-50%);margin-left:-0.195px;">1M</span>
<span id="t80" class="t" style="left:1483.1px;top:902.1px;font-size:13.6px;color:#1a2a3a;-webkit-text-stroke:0.3px #1a2a3a;letter-spacing:-0.391px;transform:translateX(-50%);margin-left:-0.195px;">3M</span>
<span id="t81" class="t" style="left:1483.1px;top:954.1px;font-size:13.6px;color:#2a1016;-webkit-text-stroke:0.3px #2a1016;letter-spacing:-0.391px;transform:translateX(-50%);margin-left:-0.195px;">1M</span>
<span id="t82" class="t" style="left:1534.4px;top:905.9px;font-size:13.6px;color:#1a2a3a;-webkit-text-stroke:0.3px #1a2a3a;letter-spacing:-0.391px;transform:translateX(-50%);margin-left:-0.195px;">3M</span>
<span id="t83" class="t" style="left:1534.4px;top:955.5px;font-size:13.6px;color:#2a1016;-webkit-text-stroke:0.3px #2a1016;letter-spacing:-0.391px;transform:translateX(-50%);margin-left:-0.195px;">1M</span>
<span id="t84" class="t" style="left:1584.4px;top:909.8px;font-size:13.6px;color:#1a2a3a;-webkit-text-stroke:0.3px #1a2a3a;letter-spacing:-0.391px;transform:translateX(-50%);margin-left:-0.195px;">3M</span>
<span id="t85" class="t" style="left:1584.4px;top:956.6px;font-size:13.6px;color:#2a1016;-webkit-text-stroke:0.3px #2a1016;letter-spacing:-0.391px;transform:translateX(-50%);margin-left:-0.195px;">1M</span>
<span id="t86" class="t" style="left:1634.4px;top:912.0px;font-size:13.6px;color:#1a2a3a;-webkit-text-stroke:0.3px #1a2a3a;letter-spacing:-0.391px;transform:translateX(-50%);margin-left:-0.195px;">3M</span>
<span id="t87" class="t" style="left:1634.4px;top:956.0px;font-size:13.6px;color:#2a1016;-webkit-text-stroke:0.3px #2a1016;letter-spacing:-0.391px;transform:translateX(-50%);margin-left:-0.195px;">1M</span>
<span id="t88" class="t" style="left:1685.8px;top:914.8px;font-size:13.6px;color:#1a2a3a;-webkit-text-stroke:0.3px #1a2a3a;letter-spacing:-0.391px;transform:translateX(-50%);margin-left:-0.195px;">3M</span>
<span id="t89" class="t" style="left:1685.8px;top:958.4px;font-size:13.6px;color:#2a1016;-webkit-text-stroke:0.3px #2a1016;letter-spacing:-0.391px;transform:translateX(-50%);margin-left:-0.195px;">1M</span>
<span id="t90" class="t" style="left:1735.8px;top:924.8px;font-size:13.6px;color:#1a2a3a;-webkit-text-stroke:0.3px #1a2a3a;letter-spacing:-0.391px;transform:translateX(-50%);margin-left:-0.195px;">2M</span>
<span id="t91" class="t" style="left:1735.8px;top:958.6px;font-size:13.6px;color:#2a1016;-webkit-text-stroke:0.3px #2a1016;letter-spacing:-0.391px;transform:translateX(-50%);margin-left:-0.195px;">1M</span>
<span id="t92" class="t" style="left:1787.1px;top:925.9px;font-size:13.6px;color:#1a2a3a;-webkit-text-stroke:0.3px #1a2a3a;letter-spacing:-0.391px;transform:translateX(-50%);margin-left:-0.195px;">2M</span>
<span id="t93" class="t" style="left:1787.1px;top:959.1px;font-size:13.6px;color:#2a1016;-webkit-text-stroke:0.3px #2a1016;letter-spacing:-0.391px;transform:translateX(-50%);margin-left:-0.195px;">1M</span>
<span id="t94" class="t" style="left:1837.1px;top:929.0px;font-size:13.6px;color:#1a2a3a;-webkit-text-stroke:0.3px #1a2a3a;letter-spacing:-0.391px;transform:translateX(-50%);margin-left:-0.195px;">2M</span>
<span id="t95" class="t" style="left:1837.1px;top:960.3px;font-size:13.6px;color:#2a1016;-webkit-text-stroke:0.3px #2a1016;letter-spacing:0.583px;transform:translateX(-50%);margin-left:0.292px;">893K</span>
<div class="b" style="left:1564px;top:811px;width:225px;height:136px;background:rgba(255,255,255,0.955);border-radius:6px;box-shadow:0 2px 12px rgba(0,0,0,0.13);"></div>
<div class="b" style="left:1564px;top:911px;width:225px;height:1px;background:#ececec;"></div>
<span id="t96" class="t" style="left:1581.0px;top:825.0px;font-size:16px;color:#262626;font-weight:700;letter-spacing:-0.195px;">Эпсилон</span>
<div class="b" style="left:1583px;top:863.5px;width:15px;height:6px;background:#4da2f1;border-radius:1px;"></div>
<div class="b" style="left:1583px;top:888.5px;width:15px;height:6px;background:#ff3d64;border-radius:1px;"></div>
<span id="t97" class="t" style="left:1607.5px;top:859.2px;font-size:14.5px;color:#262626;font-weight:700;letter-spacing:-0.250px;">Самовывоз</span>
<span id="t98" class="t" style="left:1607.5px;top:883.7px;font-size:14.5px;color:#262626;letter-spacing:0.746px;">Доставка</span>
<span id="t99" class="t" style="left:1700.0px;top:861.1px;font-size:14px;color:#262626;font-weight:700;letter-spacing:-1.203px;white-space:pre;font-family:'Liberation Mono','DejaVu Sans Mono',monospace;">3 130 055</span>
<span id="t100" class="t" style="left:1700.0px;top:885.7px;font-size:14.5px;color:#262626;letter-spacing:0.186px;white-space:pre;">1 354 894</span>
<span id="t101" class="t" style="left:1583.0px;top:922.2px;font-size:14.5px;color:#262626;letter-spacing:0.109px;">Сумма</span>
<span id="t102" class="t" style="left:1700.0px;top:922.2px;font-size:14.5px;color:#262626;letter-spacing:0.186px;white-space:pre;">4 484 949</span>
<svg class="b" style="left:1536px;top:881px" width="14" height="21" viewBox="0 0 14 21"><path d="M1 1V16.4L4.6 13L7.4 19.6L10 18.4L7.2 12H12.2Z" fill="#fff" stroke="#111" stroke-width="1.1" stroke-linejoin="round"/></svg>
<div class="b" style="left:100px;top:1068.5px;width:1775px;height:14px;background:#fff;border-radius:3px;"></div>
<div class="b" style="left:0;top:0;width:1920px;height:1080px;box-sizing:border-box;border:1px solid #b4238f;pointer-events:none;"></div>
</body></html>
